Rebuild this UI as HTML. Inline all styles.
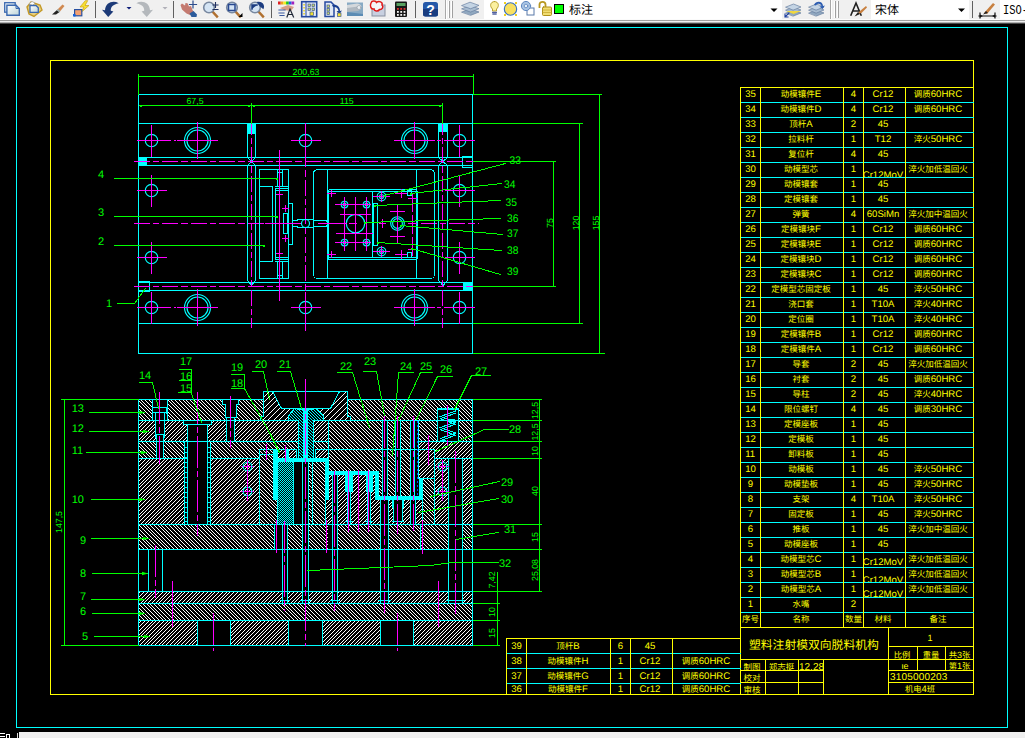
<!DOCTYPE html>
<html><head><meta charset="utf-8"><title>CAD</title>
<style>html,body{margin:0;padding:0;background:#000;overflow:hidden}svg{display:block}text{white-space:pre}.t{font-family:"Liberation Sans","Noto Sans CJK SC",sans-serif;text-rendering:geometricPrecision}</style>
</head><body>
<svg width="1025" height="738" viewBox="0 0 1025 738" shape-rendering="crispEdges" stroke-linecap="square" font-family="'Liberation Sans', sans-serif">
<defs>
<pattern id="hb" width="15" height="15" patternUnits="userSpaceOnUse"><rect x="0" y="0" width="1" height="1" fill="#ffffff"/><rect x="4" y="0" width="1" height="1" fill="#ffffff"/><rect x="8" y="0" width="1" height="1" fill="#ffffff"/><rect x="11" y="0" width="1" height="1" fill="#ffffff"/><rect x="1" y="1" width="1" height="1" fill="#ffffff"/><rect x="5" y="1" width="1" height="1" fill="#ffffff"/><rect x="9" y="1" width="1" height="1" fill="#ffffff"/><rect x="12" y="1" width="1" height="1" fill="#ffffff"/><rect x="2" y="2" width="1" height="1" fill="#ffffff"/><rect x="6" y="2" width="1" height="1" fill="#ffffff"/><rect x="10" y="2" width="1" height="1" fill="#ffffff"/><rect x="13" y="2" width="1" height="1" fill="#ffffff"/><rect x="3" y="3" width="1" height="1" fill="#ffffff"/><rect x="7" y="3" width="1" height="1" fill="#ffffff"/><rect x="11" y="3" width="1" height="1" fill="#ffffff"/><rect x="14" y="3" width="1" height="1" fill="#ffffff"/><rect x="0" y="4" width="1" height="1" fill="#ffffff"/><rect x="4" y="4" width="1" height="1" fill="#ffffff"/><rect x="8" y="4" width="1" height="1" fill="#ffffff"/><rect x="12" y="4" width="1" height="1" fill="#ffffff"/><rect x="1" y="5" width="1" height="1" fill="#ffffff"/><rect x="5" y="5" width="1" height="1" fill="#ffffff"/><rect x="9" y="5" width="1" height="1" fill="#ffffff"/><rect x="13" y="5" width="1" height="1" fill="#ffffff"/><rect x="2" y="6" width="1" height="1" fill="#ffffff"/><rect x="6" y="6" width="1" height="1" fill="#ffffff"/><rect x="10" y="6" width="1" height="1" fill="#ffffff"/><rect x="14" y="6" width="1" height="1" fill="#ffffff"/><rect x="0" y="7" width="1" height="1" fill="#ffffff"/><rect x="3" y="7" width="1" height="1" fill="#ffffff"/><rect x="7" y="7" width="1" height="1" fill="#ffffff"/><rect x="11" y="7" width="1" height="1" fill="#ffffff"/><rect x="1" y="8" width="1" height="1" fill="#ffffff"/><rect x="4" y="8" width="1" height="1" fill="#ffffff"/><rect x="8" y="8" width="1" height="1" fill="#ffffff"/><rect x="12" y="8" width="1" height="1" fill="#ffffff"/><rect x="2" y="9" width="1" height="1" fill="#ffffff"/><rect x="5" y="9" width="1" height="1" fill="#ffffff"/><rect x="9" y="9" width="1" height="1" fill="#ffffff"/><rect x="13" y="9" width="1" height="1" fill="#ffffff"/><rect x="3" y="10" width="1" height="1" fill="#ffffff"/><rect x="6" y="10" width="1" height="1" fill="#ffffff"/><rect x="10" y="10" width="1" height="1" fill="#ffffff"/><rect x="14" y="10" width="1" height="1" fill="#ffffff"/><rect x="0" y="11" width="1" height="1" fill="#ffffff"/><rect x="4" y="11" width="1" height="1" fill="#ffffff"/><rect x="7" y="11" width="1" height="1" fill="#ffffff"/><rect x="11" y="11" width="1" height="1" fill="#ffffff"/><rect x="1" y="12" width="1" height="1" fill="#ffffff"/><rect x="5" y="12" width="1" height="1" fill="#ffffff"/><rect x="8" y="12" width="1" height="1" fill="#ffffff"/><rect x="12" y="12" width="1" height="1" fill="#ffffff"/><rect x="2" y="13" width="1" height="1" fill="#ffffff"/><rect x="6" y="13" width="1" height="1" fill="#ffffff"/><rect x="9" y="13" width="1" height="1" fill="#ffffff"/><rect x="13" y="13" width="1" height="1" fill="#ffffff"/><rect x="3" y="14" width="1" height="1" fill="#ffffff"/><rect x="7" y="14" width="1" height="1" fill="#ffffff"/><rect x="10" y="14" width="1" height="1" fill="#ffffff"/><rect x="14" y="14" width="1" height="1" fill="#ffffff"/></pattern>
<pattern id="hf" width="15" height="15" patternUnits="userSpaceOnUse"><rect x="0" y="0" width="1" height="1" fill="#ffffff"/><rect x="4" y="0" width="1" height="1" fill="#ffffff"/><rect x="8" y="0" width="1" height="1" fill="#ffffff"/><rect x="11" y="0" width="1" height="1" fill="#ffffff"/><rect x="3" y="1" width="1" height="1" fill="#ffffff"/><rect x="7" y="1" width="1" height="1" fill="#ffffff"/><rect x="10" y="1" width="1" height="1" fill="#ffffff"/><rect x="14" y="1" width="1" height="1" fill="#ffffff"/><rect x="2" y="2" width="1" height="1" fill="#ffffff"/><rect x="6" y="2" width="1" height="1" fill="#ffffff"/><rect x="9" y="2" width="1" height="1" fill="#ffffff"/><rect x="13" y="2" width="1" height="1" fill="#ffffff"/><rect x="1" y="3" width="1" height="1" fill="#ffffff"/><rect x="5" y="3" width="1" height="1" fill="#ffffff"/><rect x="8" y="3" width="1" height="1" fill="#ffffff"/><rect x="12" y="3" width="1" height="1" fill="#ffffff"/><rect x="0" y="4" width="1" height="1" fill="#ffffff"/><rect x="4" y="4" width="1" height="1" fill="#ffffff"/><rect x="7" y="4" width="1" height="1" fill="#ffffff"/><rect x="11" y="4" width="1" height="1" fill="#ffffff"/><rect x="3" y="5" width="1" height="1" fill="#ffffff"/><rect x="6" y="5" width="1" height="1" fill="#ffffff"/><rect x="10" y="5" width="1" height="1" fill="#ffffff"/><rect x="14" y="5" width="1" height="1" fill="#ffffff"/><rect x="2" y="6" width="1" height="1" fill="#ffffff"/><rect x="5" y="6" width="1" height="1" fill="#ffffff"/><rect x="9" y="6" width="1" height="1" fill="#ffffff"/><rect x="13" y="6" width="1" height="1" fill="#ffffff"/><rect x="1" y="7" width="1" height="1" fill="#ffffff"/><rect x="4" y="7" width="1" height="1" fill="#ffffff"/><rect x="8" y="7" width="1" height="1" fill="#ffffff"/><rect x="12" y="7" width="1" height="1" fill="#ffffff"/><rect x="0" y="8" width="1" height="1" fill="#ffffff"/><rect x="3" y="8" width="1" height="1" fill="#ffffff"/><rect x="7" y="8" width="1" height="1" fill="#ffffff"/><rect x="11" y="8" width="1" height="1" fill="#ffffff"/><rect x="2" y="9" width="1" height="1" fill="#ffffff"/><rect x="6" y="9" width="1" height="1" fill="#ffffff"/><rect x="10" y="9" width="1" height="1" fill="#ffffff"/><rect x="14" y="9" width="1" height="1" fill="#ffffff"/><rect x="1" y="10" width="1" height="1" fill="#ffffff"/><rect x="5" y="10" width="1" height="1" fill="#ffffff"/><rect x="9" y="10" width="1" height="1" fill="#ffffff"/><rect x="13" y="10" width="1" height="1" fill="#ffffff"/><rect x="0" y="11" width="1" height="1" fill="#ffffff"/><rect x="4" y="11" width="1" height="1" fill="#ffffff"/><rect x="8" y="11" width="1" height="1" fill="#ffffff"/><rect x="12" y="11" width="1" height="1" fill="#ffffff"/><rect x="3" y="12" width="1" height="1" fill="#ffffff"/><rect x="7" y="12" width="1" height="1" fill="#ffffff"/><rect x="11" y="12" width="1" height="1" fill="#ffffff"/><rect x="14" y="12" width="1" height="1" fill="#ffffff"/><rect x="2" y="13" width="1" height="1" fill="#ffffff"/><rect x="6" y="13" width="1" height="1" fill="#ffffff"/><rect x="10" y="13" width="1" height="1" fill="#ffffff"/><rect x="13" y="13" width="1" height="1" fill="#ffffff"/><rect x="1" y="14" width="1" height="1" fill="#ffffff"/><rect x="5" y="14" width="1" height="1" fill="#ffffff"/><rect x="9" y="14" width="1" height="1" fill="#ffffff"/><rect x="12" y="14" width="1" height="1" fill="#ffffff"/></pattern>
<pattern id="hfw" width="11" height="11" patternUnits="userSpaceOnUse"><rect x="0" y="0" width="1" height="1" fill="#ffffff"/><rect x="5" y="0" width="1" height="1" fill="#ffffff"/><rect x="4" y="1" width="1" height="1" fill="#ffffff"/><rect x="10" y="1" width="1" height="1" fill="#ffffff"/><rect x="3" y="2" width="1" height="1" fill="#ffffff"/><rect x="9" y="2" width="1" height="1" fill="#ffffff"/><rect x="2" y="3" width="1" height="1" fill="#ffffff"/><rect x="8" y="3" width="1" height="1" fill="#ffffff"/><rect x="1" y="4" width="1" height="1" fill="#ffffff"/><rect x="7" y="4" width="1" height="1" fill="#ffffff"/><rect x="0" y="5" width="1" height="1" fill="#ffffff"/><rect x="6" y="5" width="1" height="1" fill="#ffffff"/><rect x="5" y="6" width="1" height="1" fill="#ffffff"/><rect x="10" y="6" width="1" height="1" fill="#ffffff"/><rect x="4" y="7" width="1" height="1" fill="#ffffff"/><rect x="9" y="7" width="1" height="1" fill="#ffffff"/><rect x="3" y="8" width="1" height="1" fill="#ffffff"/><rect x="8" y="8" width="1" height="1" fill="#ffffff"/><rect x="2" y="9" width="1" height="1" fill="#ffffff"/><rect x="7" y="9" width="1" height="1" fill="#ffffff"/><rect x="1" y="10" width="1" height="1" fill="#ffffff"/><rect x="6" y="10" width="1" height="1" fill="#ffffff"/></pattern>
<pattern id="hb2" width="3" height="3" patternUnits="userSpaceOnUse"><rect x="0" y="0" width="1" height="1" fill="#00ffff"/><rect x="1" y="1" width="1" height="1" fill="#00ffff"/><rect x="2" y="2" width="1" height="1" fill="#00ffff"/></pattern>
<pattern id="hx" width="2" height="2" patternUnits="userSpaceOnUse"><rect x="0" y="0" width="1" height="1" fill="#00ffff"/><rect x="1" y="1" width="1" height="1" fill="#00ffff"/></pattern>
</defs>
<rect x="0" y="0" width="1025" height="738" fill="#000"/>
<rect x="0" y="0" width="1025" height="19" fill="#f0f0f0"/>
<rect x="0" y="19" width="1025" height="1" fill="#fbfbfb"/>
<rect x="0" y="20" width="1025" height="1" fill="#a0a0a0"/>
<rect x="0" y="21" width="1025" height="1" fill="#f0f0f0"/>
<rect x="0" y="22" width="1025" height="1" fill="#b0b0b0"/>
<rect x="0" y="23" width="1025" height="1" fill="#484848"/>
<g shape-rendering="geometricPrecision">
<defs><linearGradient id="pg" x1="0" y1="0" x2="1" y2="1"><stop offset="0" stop-color="#ffffff"/><stop offset="1" stop-color="#bcd4d8"/></linearGradient></defs>
<rect x="4.7" y="2.7" width="10.5" height="9.5" fill="url(#pg)" stroke="#3a68b0" stroke-width="1.3"/>
<path d="M6.9 5.2 H16 L19.3 8.5 V15.3 H6.9 Z" fill="url(#pg)" stroke="#3a68b0" stroke-width="1.4"/><path d="M16 5.2 V8.5 H19.3" fill="none" stroke="#3a68b0" stroke-width="1"/>
<path d="M31 2 L40 5 L42 10 L34 16.5 L29 14 L27 7 Z" fill="#e6cf80" stroke="#c49a28" stroke-width="1.4"/>
<path d="M29 4 L32 1.5 L35 3 L33 5Z" fill="#fff" stroke="#999" stroke-width=".6"/>
<path d="M30 5.5 H36 L38.3 7.8 V12.3 H30 Z" fill="url(#pg)" stroke="#3a68b0" stroke-width="1.3"/>
<path d="M52 14.5 L57 10 L59.5 12 L56 14.5 Z" fill="#222"/><path d="M57 10 L62.5 4.5 L64.5 6 L59.5 12Z" fill="#d08850"/><path d="M56.5 10.3 L58 9 L60.3 11 L59.3 12.2Z" fill="#9aa"/>
<path d="M85 1 L80 7 H84 L81 12.5 L89 5.5 H85 L87.5 1Z" fill="#f8e030" stroke="#c8a018" stroke-width=".7"/>
<rect x="74.6" y="9.6" width="7.2" height="6.2" fill="#f4a070" stroke="#2850a0" stroke-width="1.2"/><rect x="73" y="14" width="2.5" height="2.5" fill="#1060e0"/>
<rect x="95" y="1" width="1" height="17" fill="#606060"/>
<path d="M102 9.7 L108.2 16.9 L113.4 11.4 L110.8 10.8 C110.5 7 113 4.5 118.7 3.2 C113 0 105.5 2.5 105 10.2 Z" fill="#1c3a78"/>
<path d="M126.5 7 H131.5 L129 9.6Z" fill="#10207a"/>
<path d="M153 9.7 L146.8 16.9 L141.6 11.4 L144.2 10.8 C144.5 7 142 4.5 136.3 3.2 C142 0 149.5 2.5 150 10.2 Z" fill="#b4b8bc"/>
<path d="M162.5 7 H167.5 L165 9.6Z" fill="#b0b0b8"/>
<rect x="173" y="1" width="1" height="17" fill="#606060"/>
<path d="M180.5 5 L182 3.5 L185 5.5 L185.5 3 L187.5 3.2 L189 6.5 L191 6 L192.5 10 L193.5 11.5 L190 15 L186.5 13.5 L182 9.5Z" fill="#c47a70"/><path d="M189.5 13.5 L193.5 11 L197 14.5 L196.5 17 H191.5Z" fill="#2c5c9c"/>
<path d="M193 1 V8 M189.5 4.5 H196.5" stroke="#2c4c8c" stroke-width="1.2" fill="none"/>
<path d="M212 11 L217 16.5" stroke="#b07030" stroke-width="2.4"/>
<circle cx="209" cy="7.5" r="5.3" fill="#d4e4f4" stroke="#7888a0" stroke-width="1.6"/>
<path d="M215.5 2.5 V7.5 M213 5 H218 M213 9.5 H218" stroke="#203060" stroke-width="1.1"/>
<path d="M235 11 L240 16.5" stroke="#b07030" stroke-width="2.4"/>
<circle cx="232" cy="7.5" r="5.3" fill="#d4e4f4" stroke="#7888a0" stroke-width="1.6"/>
<rect x="228.5" y="4.5" width="6.5" height="6" fill="none" stroke="#284890" stroke-width="1.5"/><path d="M242.5 13 V17 H238.5Z" fill="#000"/>
<path d="M258 11 L263 16.5" stroke="#b07030" stroke-width="2.4"/>
<circle cx="255" cy="7.5" r="5.3" fill="#d4e4f4" stroke="#7888a0" stroke-width="1.6"/>
<path d="M252 9 V5 H257 M258 2.5 C262 2 264 5 263 8 L260.5 6Z" stroke="#1c3c80" stroke-width="1.5" fill="#1c3c80"/>
<rect x="271" y="1" width="1" height="17" fill="#606060"/>
<rect x="278" y="1.5" width="2.7" height="3" fill="#e02020"/>
<rect x="280.7" y="1.5" width="2.7" height="3" fill="#f0a020"/>
<rect x="283.4" y="1.5" width="2.7" height="3" fill="#f0f020"/>
<rect x="286.1" y="1.5" width="2.7" height="3" fill="#20c020"/>
<rect x="288.8" y="1.5" width="2.7" height="3" fill="#2060e0"/>
<rect x="291.5" y="1.5" width="2.7" height="3" fill="#a020c0"/>
<path d="M280 8 L288 5 L294 7 L291 11 L284 10Z" fill="#d8a088"/><path d="M279 10 H285 M279 13 H284 M280 15.5 H284" stroke="#3858a0" stroke-width="1.2"/><path d="M287 17 L290 9 L293.5 17 M288 14.5 H292.5" stroke="#202838" stroke-width="1.2" fill="none"/>
<rect x="301.7" y="1.7" width="15" height="15" fill="#e8eef8" stroke="#2448a0" stroke-width="1.6"/><path d="M306 2 V16" stroke="#2448a0" stroke-width="1"/>
<rect x="303.3" y="4" width="1.5" height="1.5" fill="#e8d020"/>
<rect x="303.3" y="7" width="1.5" height="1.5" fill="#e8d020"/>
<rect x="303.3" y="10" width="1.5" height="1.5" fill="#e8d020"/>
<rect x="303.3" y="13" width="1.5" height="1.5" fill="#e8d020"/>
<rect x="308" y="4" width="2.6" height="2.6" fill="#c8d870" stroke="#405890" stroke-width=".7"/>
<rect x="312" y="4" width="2.6" height="2.6" fill="#c8d870" stroke="#405890" stroke-width=".7"/>
<rect x="308" y="8" width="2.6" height="2.6" fill="#c8d870" stroke="#405890" stroke-width=".7"/>
<rect x="312" y="8" width="2.6" height="2.6" fill="#c8d870" stroke="#405890" stroke-width=".7"/>
<rect x="310" y="12" width="3.5" height="3.5" fill="#f0e030" stroke="#405890" stroke-width=".7"/>
<path d="M325 2 H331 L334 5 V16.5 H325Z" fill="#e0e8f4" stroke="#2448a0" stroke-width="1.5"/>
<rect x="327" y="5" width="2.6" height="2.6" fill="#c8d870" stroke="#405890" stroke-width=".7"/>
<rect x="327" y="8.5" width="2.6" height="2.6" fill="#c8d870" stroke="#405890" stroke-width=".7"/>
<rect x="327" y="12" width="2.6" height="2.6" fill="#c8d870" stroke="#405890" stroke-width=".7"/>
<path d="M332 5 C337 4 340 7 340 11 L342 10.5 L339.5 14 L336.5 11 L338.5 11 C338 8 336 6.5 333 7Z" fill="#1c4090"/><rect x="337.5" y="13" width="3.5" height="3.5" fill="#f0e030" stroke="#405890" stroke-width=".7"/>
<path d="M347 2.5 H363 V16 H347Z" fill="#88aac4"/><path d="M347 5 L357 3.5 C362 4 363 8 359 10 L347 10.5Z" fill="#d4d8dc"/><path d="M347 8 L358 6.5 C361 7 361 10 358 11 L347 12Z" fill="#b0b8c0"/><circle cx="359" cy="7.5" r="2" fill="#e8ecf0" stroke="#909aa4" stroke-width=".6"/><path d="M347 12 L363 14 V16 H347Z" fill="#5c8cb4"/>
<rect x="372" y="5" width="13" height="11" fill="#c8d0e0" stroke="#8890a0" stroke-width="1"/><path d="M371 3 C372 0 376 1 376.5 2.5 C379 0.5 383 2 382 5 C384 7 382 10 379.5 9.5 C378 12 374 11 374 9 C371 9.5 369.5 6 371 3Z" fill="#f4f4f8" stroke="#e01818" stroke-width="1.5"/>
<rect x="395" y="1.5" width="12" height="15.5" rx="1" fill="#181818"/><rect x="396.5" y="3" width="9" height="3" fill="#58a060"/>
<rect x="397" y="8" width="1.8" height="1.8" fill="#e03030"/>
<rect x="400.3" y="8" width="1.8" height="1.8" fill="#e03030"/>
<rect x="403.6" y="8" width="1.8" height="1.8" fill="#e03030"/>
<rect x="397" y="11" width="1.8" height="1.8" fill="#f4f4f4"/>
<rect x="400.3" y="11" width="1.8" height="1.8" fill="#f4f4f4"/>
<rect x="403.6" y="11" width="1.8" height="1.8" fill="#f4f4f4"/>
<rect x="397" y="14" width="1.8" height="1.8" fill="#f4f4f4"/>
<rect x="400.3" y="14" width="1.8" height="1.8" fill="#f4f4f4"/>
<rect x="403.6" y="14" width="1.8" height="1.8" fill="#f4f4f4"/>
<rect x="415" y="1" width="1" height="17" fill="#606060"/>
<rect x="423" y="2" width="15" height="14.5" rx="2.5" fill="#2458a8"/><path d="M423 9 H438 V14 Q438 16.5 435.5 16.5 H425.5 Q423 16.5 423 14Z" fill="#183c80"/>
<text x="430.5" y="14.6" font-size="14" font-weight="bold" fill="#fff" text-anchor="middle" font-family="'Liberation Sans', sans-serif">?</text>
<rect x="445" y="0" width="1" height="19" fill="#a8a8a8"/>
<rect x="446" y="0" width="1" height="19" fill="#fff"/>
<rect x="448" y="1" width="1" height="17" fill="#fff"/>
<rect x="449" y="1" width="1" height="17" fill="#a0a0a0"/>
<rect x="451" y="1" width="1" height="17" fill="#fff"/>
<rect x="452" y="1" width="1" height="17" fill="#a0a0a0"/>
<path d="M462 12.0 L470 8.8 L479 12.0 L471 15.2 Z" fill="#90a8c0" stroke="#6880a0" stroke-width=".7"/>
<path d="M462 8.7 L470 5.499999999999999 L479 8.7 L471 11.899999999999999 Z" fill="#a8bcd0" stroke="#6880a0" stroke-width=".7"/>
<path d="M462 5.4 L470 2.2 L479 5.4 L471 8.600000000000001 Z" fill="#c4d4e4" stroke="#6880a0" stroke-width=".7"/>
<rect x="484" y="0" width="298" height="19" fill="#ffffff"/>
<path d="M494.5 1.5 C490 1.5 489.5 6.5 492.5 9 V11 H496.5 V9 C499.5 6.5 499 1.5 494.5 1.5Z" fill="#fbf0a0" stroke="#b8a030" stroke-width="1"/><path d="M492.7 12.3 H496.3 M493 14 H496" stroke="#5060a0" stroke-width="1.3"/>
<circle cx="510.5" cy="9" r="6.2" fill="#f8e060" stroke="#3870c0" stroke-width="1.1"/>
<rect x="504" y="2" width="2" height="2" fill="#f0d020"/>
<rect x="515" y="2" width="2" height="2" fill="#f0d020"/>
<rect x="504" y="14" width="2" height="2" fill="#f0d020"/>
<rect x="515" y="14" width="2" height="2" fill="#f0d020"/>
<rect x="527" y="8" width="7" height="7" fill="#fff" stroke="#5878a8" stroke-width="1"/><circle cx="526" cy="6" r="4.6" fill="#a8c4e4" stroke="#6088c0" stroke-width="1"/><circle cx="526" cy="6" r="1.8" fill="#e8f0f8" stroke="#6088c0" stroke-width=".8"/>
<path d="M539.5 7 V4.5 C539.5 1 545.5 1 545.5 4.5 V6" fill="none" stroke="#b89820" stroke-width="1.8"/><rect x="542.5" y="7" width="9" height="8.5" rx="1" fill="#f0dc70" stroke="#b09018" stroke-width="1"/><path d="M543 10 H551 M543 12.5 H551" stroke="#c8a830" stroke-width=".8"/>
<rect x="554.5" y="4.5" width="9" height="9" fill="#00ff00" stroke="#000" stroke-width="1"/>
<text class="t" x="569" y="14" font-size="12" fill="#000">标注</text>
<path d="M770.5 8.5 H777.5 L774 12Z" fill="#000"/>
<path d="M786 13 L793.5 10 L801 13 L793.5 16 Z" fill="#90a8c0" stroke="#6880a0" stroke-width=".7"/>
<path d="M786 10 L793.5 7 L801 10 L793.5 13 Z" fill="#a8bcd0" stroke="#6880a0" stroke-width=".7"/>
<path d="M786 7 L793.5 4 L801 7 L793.5 10 Z" fill="#c4d4e4" stroke="#6880a0" stroke-width=".7"/>
<path d="M809 13 L816.5 10 L824 13 L816.5 16 Z" fill="#90a8c0" stroke="#6880a0" stroke-width=".7"/>
<path d="M809 10 L816.5 7 L824 10 L816.5 13 Z" fill="#a8bcd0" stroke="#6880a0" stroke-width=".7"/>
<path d="M809 7 L816.5 4 L824 7 L816.5 10 Z" fill="#c4d4e4" stroke="#6880a0" stroke-width=".7"/>
<path d="M786 11 L801 11 L793.5 14 Z" fill="#f0d840"/><path d="M785 17 L789 13 M785 17 V14 M785 17 H788" stroke="#2040a0" stroke-width="1.1" fill="none"/>
<path d="M814 5 C816 0 823 1 823 6 L825 5.5 L822.5 9 L819.5 6.5 L821.5 6.3 C821 3 817 3 816 5.5Z" fill="#2c5cb0"/>
<rect x="830" y="0" width="1" height="19" fill="#a8a8a8"/>
<rect x="831" y="0" width="1" height="19" fill="#fff"/>
<rect x="834" y="1" width="1" height="17" fill="#fff"/>
<rect x="835" y="1" width="1" height="17" fill="#a0a0a0"/>
<rect x="837" y="1" width="1" height="17" fill="#fff"/>
<rect x="838" y="1" width="1" height="17" fill="#a0a0a0"/>
<path d="M851 15 L856 3 L861 15 M853 11 H859" stroke="#202020" stroke-width="1.6" fill="none"/><path d="M855 16 L860 11 L866 6 L867 7.5 L862 12.5Z" fill="#c88040"/><path d="M854.5 16.5 L858 12 L860 14Z" fill="#202020"/>
<rect x="871" y="0" width="98" height="19" fill="#ffffff"/>
<text class="t" x="875" y="14" font-size="12" fill="#000">宋体</text>
<path d="M958 8.5 H965 L961.5 12Z" fill="#000"/>
<rect x="972" y="1" width="1" height="17" fill="#606060"/>
<path d="M979 16 H996 M980 13 V18 M995 13 V18" stroke="#101010" stroke-width="1.2" fill="none"/><path d="M983 16 L980 14.5 V17.5Z M992 16 L995 14.5 V17.5Z" fill="#101010"/><path d="M984 13 L993 3 L995 4.5 L987 14Z" fill="#c88040"/><path d="M983 14.5 L986 11 L988 13Z" fill="#202020"/>
<rect x="1000" y="0" width="25" height="19" fill="#ffffff"/>
<text x="1003" y="14" font-size="12" fill="#000" font-family="'Liberation Mono', monospace" textLength="25" lengthAdjust="spacingAndGlyphs">ISO-</text>
</g>
<rect x="19" y="732" width="1006" height="6" fill="#f0f0f0"/>
<rect x="0" y="733" width="5" height="1" fill="#fff"/>
<rect x="0" y="736" width="5" height="1" fill="#fff"/>
<rect x="6" y="734" width="4" height="1" fill="#fff"/>
<rect x="6" y="735" width="1" height="3" fill="#fff"/>
<rect x="9" y="735" width="1" height="3" fill="#fff"/>
<rect x="17" y="733" width="1" height="5" fill="#ddd"/>
<rect x="16.5" y="27.5" width="991" height="700" stroke="#00ffff" stroke-width="1" fill="none"/>
<rect x="50.5" y="60.5" width="923" height="634" stroke="#ffff00" stroke-width="1" fill="none"/>
<rect x="138.5" y="94.5" width="334" height="259" stroke="#00ffff" stroke-width="1" fill="none"/>
<line x1="138.5" y1="123.5" x2="472.5" y2="123.5" stroke="#00ffff" stroke-width="1"/>
<line x1="138.5" y1="323.5" x2="472.5" y2="323.5" stroke="#00ffff" stroke-width="1"/>
<line x1="138.5" y1="157.5" x2="472.5" y2="157.5" stroke="#00ffff" stroke-width="1"/>
<line x1="138.5" y1="165.5" x2="472.5" y2="165.5" stroke="#00ffff" stroke-width="1"/>
<line x1="138.5" y1="282.5" x2="472.5" y2="282.5" stroke="#00ffff" stroke-width="1"/>
<line x1="138.5" y1="290.5" x2="472.5" y2="290.5" stroke="#00ffff" stroke-width="1"/>
<line x1="247.5" y1="123.5" x2="247.5" y2="157.5" stroke="#00ffff" stroke-width="1"/>
<line x1="255.5" y1="123.5" x2="255.5" y2="157.5" stroke="#00ffff" stroke-width="1"/>
<line x1="247.5" y1="165.5" x2="247.5" y2="280.5" stroke="#00ffff" stroke-width="1"/>
<line x1="255.5" y1="165.5" x2="255.5" y2="280.5" stroke="#00ffff" stroke-width="1"/>
<line x1="247.5" y1="157.5" x2="255.5" y2="165.5" stroke="#00ffff" stroke-width="1"/>
<line x1="255.5" y1="157.5" x2="247.5" y2="165.5" stroke="#00ffff" stroke-width="1"/>
<line x1="247.5" y1="280.5" x2="251.5" y2="285.5" stroke="#00ffff" stroke-width="1"/>
<line x1="255.5" y1="280.5" x2="251.5" y2="285.5" stroke="#00ffff" stroke-width="1"/>
<line x1="438.5" y1="123.5" x2="438.5" y2="157.5" stroke="#00ffff" stroke-width="1"/>
<line x1="447.5" y1="123.5" x2="447.5" y2="157.5" stroke="#00ffff" stroke-width="1"/>
<line x1="438.5" y1="165.5" x2="438.5" y2="280.5" stroke="#00ffff" stroke-width="1"/>
<line x1="447.5" y1="165.5" x2="447.5" y2="280.5" stroke="#00ffff" stroke-width="1"/>
<line x1="438.5" y1="157.5" x2="447.5" y2="165.5" stroke="#00ffff" stroke-width="1"/>
<line x1="447.5" y1="157.5" x2="438.5" y2="165.5" stroke="#00ffff" stroke-width="1"/>
<line x1="438.5" y1="280.5" x2="443" y2="285.5" stroke="#00ffff" stroke-width="1"/>
<line x1="447.5" y1="280.5" x2="443" y2="285.5" stroke="#00ffff" stroke-width="1"/>
<rect x="139" y="158" width="8" height="7" fill="#00ffff"/>
<rect x="248" y="124" width="7" height="10" fill="#00ffff"/>
<rect x="439" y="124" width="8" height="8" fill="#00ffff"/>
<rect x="463" y="283" width="9" height="7" fill="#00ffff"/>
<rect x="462.5" y="156.5" width="10" height="11" stroke="#00ffff" stroke-width="1" fill="none"/>
<rect x="138.5" y="281.5" width="11" height="10" stroke="#00ffff" stroke-width="1" fill="none"/>
<circle cx="151.5" cy="140.5" r="6.2" stroke="#00ffff" stroke-width="1.15" fill="none" shape-rendering="geometricPrecision"/>
<line x1="137.5" y1="140.5" x2="166.5" y2="140.5" stroke="#ff00ff" stroke-width="1"/>
<line x1="151.5" y1="125.5" x2="151.5" y2="156.5" stroke="#ff00ff" stroke-width="1"/>
<circle cx="305.5" cy="140.5" r="6.2" stroke="#00ffff" stroke-width="1.15" fill="none" shape-rendering="geometricPrecision"/>
<line x1="291.5" y1="140.5" x2="320.5" y2="140.5" stroke="#ff00ff" stroke-width="1"/>
<line x1="305.5" y1="125.5" x2="305.5" y2="156.5" stroke="#ff00ff" stroke-width="1"/>
<circle cx="459.5" cy="140.5" r="6.2" stroke="#00ffff" stroke-width="1.15" fill="none" shape-rendering="geometricPrecision"/>
<line x1="445.5" y1="140.5" x2="474.5" y2="140.5" stroke="#ff00ff" stroke-width="1"/>
<line x1="459.5" y1="125.5" x2="459.5" y2="156.5" stroke="#ff00ff" stroke-width="1"/>
<circle cx="151.5" cy="190.5" r="6.2" stroke="#00ffff" stroke-width="1.15" fill="none" shape-rendering="geometricPrecision"/>
<line x1="137.5" y1="190.5" x2="166.5" y2="190.5" stroke="#ff00ff" stroke-width="1"/>
<line x1="151.5" y1="175.5" x2="151.5" y2="206.5" stroke="#ff00ff" stroke-width="1"/>
<circle cx="151.5" cy="257.5" r="6.2" stroke="#00ffff" stroke-width="1.15" fill="none" shape-rendering="geometricPrecision"/>
<line x1="137.5" y1="257.5" x2="166.5" y2="257.5" stroke="#ff00ff" stroke-width="1"/>
<line x1="151.5" y1="242.5" x2="151.5" y2="273.5" stroke="#ff00ff" stroke-width="1"/>
<circle cx="459.5" cy="190.5" r="6.2" stroke="#00ffff" stroke-width="1.15" fill="none" shape-rendering="geometricPrecision"/>
<line x1="445.5" y1="190.5" x2="474.5" y2="190.5" stroke="#ff00ff" stroke-width="1"/>
<line x1="459.5" y1="175.5" x2="459.5" y2="206.5" stroke="#ff00ff" stroke-width="1"/>
<circle cx="459.5" cy="257.5" r="6.2" stroke="#00ffff" stroke-width="1.15" fill="none" shape-rendering="geometricPrecision"/>
<line x1="445.5" y1="257.5" x2="474.5" y2="257.5" stroke="#ff00ff" stroke-width="1"/>
<line x1="459.5" y1="242.5" x2="459.5" y2="273.5" stroke="#ff00ff" stroke-width="1"/>
<circle cx="151.5" cy="307.5" r="6.2" stroke="#00ffff" stroke-width="1.15" fill="none" shape-rendering="geometricPrecision"/>
<line x1="137.5" y1="307.5" x2="166.5" y2="307.5" stroke="#ff00ff" stroke-width="1"/>
<line x1="151.5" y1="292.5" x2="151.5" y2="323.5" stroke="#ff00ff" stroke-width="1"/>
<circle cx="305.5" cy="307.5" r="6.2" stroke="#00ffff" stroke-width="1.15" fill="none" shape-rendering="geometricPrecision"/>
<line x1="291.5" y1="307.5" x2="320.5" y2="307.5" stroke="#ff00ff" stroke-width="1"/>
<line x1="305.5" y1="292.5" x2="305.5" y2="323.5" stroke="#ff00ff" stroke-width="1"/>
<circle cx="459.5" cy="307.5" r="6.2" stroke="#00ffff" stroke-width="1.15" fill="none" shape-rendering="geometricPrecision"/>
<line x1="445.5" y1="307.5" x2="474.5" y2="307.5" stroke="#ff00ff" stroke-width="1"/>
<line x1="459.5" y1="292.5" x2="459.5" y2="323.5" stroke="#ff00ff" stroke-width="1"/>
<circle cx="197.5" cy="140.5" r="13" stroke="#00ffff" stroke-width="1.15" fill="none" shape-rendering="geometricPrecision"/>
<circle cx="197.5" cy="140.5" r="10.5" stroke="#00ffff" stroke-width="1.15" fill="none" shape-rendering="geometricPrecision"/>
<line x1="177.5" y1="140.5" x2="217.5" y2="140.5" stroke="#ff00ff" stroke-width="1"/>
<line x1="197.5" y1="122.5" x2="197.5" y2="158.5" stroke="#ff00ff" stroke-width="1"/>
<circle cx="414.5" cy="140.5" r="13" stroke="#00ffff" stroke-width="1.15" fill="none" shape-rendering="geometricPrecision"/>
<circle cx="414.5" cy="140.5" r="10.5" stroke="#00ffff" stroke-width="1.15" fill="none" shape-rendering="geometricPrecision"/>
<line x1="394.5" y1="140.5" x2="434.5" y2="140.5" stroke="#ff00ff" stroke-width="1"/>
<line x1="414.5" y1="122.5" x2="414.5" y2="158.5" stroke="#ff00ff" stroke-width="1"/>
<circle cx="197.5" cy="307.5" r="13" stroke="#00ffff" stroke-width="1.15" fill="none" shape-rendering="geometricPrecision"/>
<circle cx="197.5" cy="307.5" r="10.5" stroke="#00ffff" stroke-width="1.15" fill="none" shape-rendering="geometricPrecision"/>
<line x1="177.5" y1="307.5" x2="217.5" y2="307.5" stroke="#ff00ff" stroke-width="1"/>
<line x1="197.5" y1="289.5" x2="197.5" y2="325.5" stroke="#ff00ff" stroke-width="1"/>
<circle cx="414.5" cy="307.5" r="13" stroke="#00ffff" stroke-width="1.15" fill="none" shape-rendering="geometricPrecision"/>
<circle cx="414.5" cy="307.5" r="10.5" stroke="#00ffff" stroke-width="1.15" fill="none" shape-rendering="geometricPrecision"/>
<line x1="394.5" y1="307.5" x2="434.5" y2="307.5" stroke="#ff00ff" stroke-width="1"/>
<line x1="414.5" y1="289.5" x2="414.5" y2="325.5" stroke="#ff00ff" stroke-width="1"/>
<line x1="166.5" y1="140.5" x2="175.5" y2="140.5" stroke="#ff00ff" stroke-width="1" stroke-dasharray="4 3" stroke-linecap="butt"/>
<line x1="436.5" y1="140.5" x2="445.5" y2="140.5" stroke="#ff00ff" stroke-width="1" stroke-dasharray="4 3" stroke-linecap="butt"/>
<line x1="166.5" y1="307.5" x2="175.5" y2="307.5" stroke="#ff00ff" stroke-width="1" stroke-dasharray="4 3" stroke-linecap="butt"/>
<line x1="436.5" y1="307.5" x2="445.5" y2="307.5" stroke="#ff00ff" stroke-width="1" stroke-dasharray="4 3" stroke-linecap="butt"/>
<line x1="133.5" y1="161.5" x2="478.5" y2="161.5" stroke="#ff00ff" stroke-width="1" stroke-dasharray="16 3 6.5 3" stroke-linecap="butt"/>
<line x1="133.5" y1="286.5" x2="478.5" y2="286.5" stroke="#ff00ff" stroke-width="1" stroke-dasharray="16 3 6.5 3" stroke-linecap="butt"/>
<line x1="133.5" y1="223.5" x2="300.5" y2="223.5" stroke="#ff00ff" stroke-width="1" stroke-dasharray="16 3 6.5 3" stroke-linecap="butt"/>
<line x1="420.5" y1="223.5" x2="478.5" y2="223.5" stroke="#ff00ff" stroke-width="1" stroke-dasharray="16 3 6.5 3" stroke-linecap="butt"/>
<line x1="251.5" y1="118.5" x2="251.5" y2="327.5" stroke="#ff00ff" stroke-width="1" stroke-dasharray="16 3 6.5 3" stroke-linecap="butt"/>
<line x1="442.5" y1="118.5" x2="442.5" y2="327.5" stroke="#ff00ff" stroke-width="1" stroke-dasharray="16 3 6.5 3" stroke-linecap="butt"/>
<line x1="305.5" y1="122.5" x2="305.5" y2="330.5" stroke="#ff00ff" stroke-width="1" stroke-dasharray="16 3 6.5 3" stroke-linecap="butt"/>
<rect x="259.5" y="169.5" width="29" height="109" stroke="#00ffff" stroke-width="1" fill="none"/>
<line x1="259.5" y1="186.5" x2="272.5" y2="186.5" stroke="#00ffff" stroke-width="1"/>
<line x1="259.5" y1="261.5" x2="272.5" y2="261.5" stroke="#00ffff" stroke-width="1"/>
<line x1="272.5" y1="186.5" x2="272.5" y2="261.5" stroke="#00ffff" stroke-width="1"/>
<line x1="275.5" y1="188.5" x2="275.5" y2="259.5" stroke="#00ffff" stroke-width="1"/>
<line x1="275.5" y1="186.5" x2="288.5" y2="186.5" stroke="#00ffff" stroke-width="1"/>
<line x1="275.5" y1="188.5" x2="288.5" y2="188.5" stroke="#00ffff" stroke-width="1"/>
<line x1="275.5" y1="190.5" x2="288.5" y2="190.5" stroke="#00ffff" stroke-width="1"/>
<line x1="275.5" y1="257.5" x2="288.5" y2="257.5" stroke="#00ffff" stroke-width="1"/>
<line x1="275.5" y1="259.5" x2="288.5" y2="259.5" stroke="#00ffff" stroke-width="1"/>
<line x1="275.5" y1="261.5" x2="288.5" y2="261.5" stroke="#00ffff" stroke-width="1"/>
<rect x="277.5" y="169.5" width="5" height="17" stroke="#00ffff" stroke-width="1" fill="none"/>
<line x1="277.5" y1="172.5" x2="282.5" y2="172.5" stroke="#00ffff" stroke-width="1"/>
<rect x="277.5" y="261.5" width="5" height="17" stroke="#00ffff" stroke-width="1" fill="none"/>
<line x1="277.5" y1="275.5" x2="282.5" y2="275.5" stroke="#00ffff" stroke-width="1"/>
<path d="M288.5 203.5 L292.5 203.5 L292.5 244.5 L288.5 244.5" stroke="#00ffff" stroke-width="1" fill="none"/>
<rect x="283.5" y="213.5" width="4" height="20" stroke="#00ffff" stroke-width="1" fill="none"/>
<path d="M292.5 220.5 L296.5 220.5 L298.5 219.5 L312.5 219.5 L314.5 220.5 L325.5 220.5 L327.5 221.5" stroke="#00ffff" stroke-width="1" fill="none"/>
<path d="M292.5 226.5 L296.5 226.5 L298.5 227.5 L312.5 227.5 L314.5 226.5 L325.5 226.5 L327.5 225.5" stroke="#00ffff" stroke-width="1" fill="none"/>
<circle cx="305.5" cy="223.5" r="4" stroke="#00ffff" stroke-width="1.15" fill="none" shape-rendering="geometricPrecision"/>
<line x1="279.5" y1="150.5" x2="279.5" y2="300.5" stroke="#ff00ff" stroke-width="1"/>
<line x1="276.5" y1="194.5" x2="282.5" y2="194.5" stroke="#ff00ff" stroke-width="1"/>
<line x1="279.5" y1="191.5" x2="279.5" y2="197.5" stroke="#ff00ff" stroke-width="1"/>
<line x1="282.5" y1="208.5" x2="288.5" y2="208.5" stroke="#ff00ff" stroke-width="1"/>
<line x1="285.5" y1="205.5" x2="285.5" y2="211.5" stroke="#ff00ff" stroke-width="1"/>
<line x1="276.5" y1="223.5" x2="282.5" y2="223.5" stroke="#ff00ff" stroke-width="1"/>
<line x1="279.5" y1="220.5" x2="279.5" y2="226.5" stroke="#ff00ff" stroke-width="1"/>
<line x1="282.5" y1="238.5" x2="288.5" y2="238.5" stroke="#ff00ff" stroke-width="1"/>
<line x1="285.5" y1="235.5" x2="285.5" y2="241.5" stroke="#ff00ff" stroke-width="1"/>
<line x1="276.5" y1="253.5" x2="282.5" y2="253.5" stroke="#ff00ff" stroke-width="1"/>
<line x1="279.5" y1="250.5" x2="279.5" y2="256.5" stroke="#ff00ff" stroke-width="1"/>
<line x1="265.5" y1="223.5" x2="300.5" y2="223.5" stroke="#ff00ff" stroke-width="1"/>
<rect x="313.5" y="169.5" width="121" height="109" rx="4" ry="4" stroke="#00ffff" fill="none"/>
<line x1="327.5" y1="169.5" x2="327.5" y2="278.5" stroke="#00ffff" stroke-width="1"/>
<line x1="416.5" y1="169.5" x2="416.5" y2="278.5" stroke="#00ffff" stroke-width="1"/>
<rect x="327.5" y="189.5" width="90" height="70" rx="3" ry="3" stroke="#00ffff" fill="none"/>
<line x1="328.5" y1="191.5" x2="417.5" y2="191.5" stroke="#00ffff" stroke-width="1"/>
<line x1="328.5" y1="257.5" x2="417.5" y2="257.5" stroke="#00ffff" stroke-width="1"/>
<line x1="328.5" y1="191.5" x2="328.5" y2="257.5" stroke="#00ffff" stroke-width="1"/>
<line x1="372.5" y1="191.5" x2="372.5" y2="257.5" stroke="#00ffff" stroke-width="1"/>
<rect x="373.5" y="203.5" width="4" height="42" stroke="#00ffff" stroke-width="1" fill="none"/>
<circle cx="355.5" cy="223.5" r="9.2" stroke="#00ffff" stroke-width="1.15" fill="none" shape-rendering="geometricPrecision"/>
<circle cx="344.5" cy="204.5" r="3.3" stroke="#00ffff" stroke-width="1.15" fill="none" shape-rendering="geometricPrecision"/>
<circle cx="344.5" cy="204.5" r="1.5" stroke="#00ffff" stroke-width="1.15" fill="none" shape-rendering="geometricPrecision"/>
<circle cx="366.5" cy="204.5" r="3.3" stroke="#00ffff" stroke-width="1.15" fill="none" shape-rendering="geometricPrecision"/>
<circle cx="366.5" cy="204.5" r="1.5" stroke="#00ffff" stroke-width="1.15" fill="none" shape-rendering="geometricPrecision"/>
<circle cx="344.5" cy="242.5" r="3.3" stroke="#00ffff" stroke-width="1.15" fill="none" shape-rendering="geometricPrecision"/>
<circle cx="344.5" cy="242.5" r="1.5" stroke="#00ffff" stroke-width="1.15" fill="none" shape-rendering="geometricPrecision"/>
<circle cx="366.5" cy="242.5" r="3.3" stroke="#00ffff" stroke-width="1.15" fill="none" shape-rendering="geometricPrecision"/>
<circle cx="366.5" cy="242.5" r="1.5" stroke="#00ffff" stroke-width="1.15" fill="none" shape-rendering="geometricPrecision"/>
<line x1="335.5" y1="204.5" x2="370.5" y2="204.5" stroke="#ff00ff" stroke-width="1"/>
<line x1="340.5" y1="214.5" x2="370.5" y2="214.5" stroke="#ff00ff" stroke-width="1"/>
<line x1="336.5" y1="233.5" x2="372.5" y2="233.5" stroke="#ff00ff" stroke-width="1"/>
<line x1="335.5" y1="242.5" x2="370.5" y2="242.5" stroke="#ff00ff" stroke-width="1"/>
<line x1="344.5" y1="197.5" x2="344.5" y2="250.5" stroke="#ff00ff" stroke-width="1"/>
<line x1="355.5" y1="197.5" x2="355.5" y2="250.5" stroke="#ff00ff" stroke-width="1"/>
<line x1="366.5" y1="197.5" x2="366.5" y2="250.5" stroke="#ff00ff" stroke-width="1"/>
<line x1="349.5" y1="223.5" x2="356.5" y2="223.5" stroke="#ff00ff" stroke-width="1"/>
<line x1="318.5" y1="223.5" x2="346.5" y2="223.5" stroke="#ff00ff" stroke-width="1"/>
<line x1="327.5" y1="193.5" x2="335.5" y2="193.5" stroke="#ff00ff" stroke-width="1"/>
<line x1="331.5" y1="190.5" x2="331.5" y2="196.5" stroke="#ff00ff" stroke-width="1"/>
<line x1="327.5" y1="254.5" x2="335.5" y2="254.5" stroke="#ff00ff" stroke-width="1"/>
<line x1="331.5" y1="251.5" x2="331.5" y2="257.5" stroke="#ff00ff" stroke-width="1"/>
<circle cx="381.5" cy="196.5" r="4.3" stroke="#00ffff" stroke-width="1.15" fill="none" shape-rendering="geometricPrecision"/>
<circle cx="381.5" cy="196.5" r="2" stroke="#00ffff" stroke-width="1.15" fill="none" shape-rendering="geometricPrecision"/>
<line x1="373.5" y1="196.5" x2="389.5" y2="196.5" stroke="#ff00ff" stroke-width="1"/>
<line x1="381.5" y1="191.5" x2="381.5" y2="201.5" stroke="#ff00ff" stroke-width="1"/>
<circle cx="381.5" cy="251.5" r="4.3" stroke="#00ffff" stroke-width="1.15" fill="none" shape-rendering="geometricPrecision"/>
<circle cx="381.5" cy="251.5" r="2" stroke="#00ffff" stroke-width="1.15" fill="none" shape-rendering="geometricPrecision"/>
<line x1="373.5" y1="251.5" x2="389.5" y2="251.5" stroke="#ff00ff" stroke-width="1"/>
<line x1="381.5" y1="246.5" x2="381.5" y2="256.5" stroke="#ff00ff" stroke-width="1"/>
<circle cx="397.5" cy="223.5" r="6.8" stroke="#00ffff" stroke-width="1.15" fill="none" shape-rendering="geometricPrecision"/>
<circle cx="397.5" cy="223.5" r="4.9" stroke="#00ffff" stroke-width="1.15" fill="none" shape-rendering="geometricPrecision"/>
<line x1="390.5" y1="211.5" x2="404.5" y2="211.5" stroke="#ff00ff" stroke-width="1"/>
<line x1="397.5" y1="207.5" x2="397.5" y2="215.5" stroke="#ff00ff" stroke-width="1"/>
<line x1="390.5" y1="236.5" x2="404.5" y2="236.5" stroke="#ff00ff" stroke-width="1"/>
<line x1="397.5" y1="232.5" x2="397.5" y2="240.5" stroke="#ff00ff" stroke-width="1"/>
<line x1="395.5" y1="193.5" x2="407.5" y2="193.5" stroke="#ff00ff" stroke-width="1"/>
<line x1="401.5" y1="189.5" x2="401.5" y2="197.5" stroke="#ff00ff" stroke-width="1"/>
<line x1="395.5" y1="254.5" x2="407.5" y2="254.5" stroke="#ff00ff" stroke-width="1"/>
<line x1="401.5" y1="250.5" x2="401.5" y2="258.5" stroke="#ff00ff" stroke-width="1"/>
<line x1="408.5" y1="198.5" x2="416.5" y2="198.5" stroke="#ff00ff" stroke-width="1"/>
<line x1="412.5" y1="194.5" x2="412.5" y2="202.5" stroke="#ff00ff" stroke-width="1"/>
<line x1="408.5" y1="223.5" x2="416.5" y2="223.5" stroke="#ff00ff" stroke-width="1"/>
<line x1="412.5" y1="219.5" x2="412.5" y2="227.5" stroke="#ff00ff" stroke-width="1"/>
<line x1="408.5" y1="249.5" x2="416.5" y2="249.5" stroke="#ff00ff" stroke-width="1"/>
<line x1="412.5" y1="245.5" x2="412.5" y2="253.5" stroke="#ff00ff" stroke-width="1"/>
<line x1="379.5" y1="223.5" x2="385.5" y2="223.5" stroke="#ff00ff" stroke-width="1"/>
<line x1="382.5" y1="219.5" x2="382.5" y2="227.5" stroke="#ff00ff" stroke-width="1"/>
<rect x="407.5" y="190.5" width="4" height="5" stroke="#00ffff" stroke-width="1" fill="none"/>
<rect x="407.5" y="252.5" width="4" height="5" stroke="#00ffff" stroke-width="1" fill="none"/>
<line x1="412.5" y1="192.5" x2="412.5" y2="256.5" stroke="#ff00ff" stroke-width="1" stroke-dasharray="8 3" stroke-linecap="butt"/>
<line x1="397.5" y1="205.5" x2="397.5" y2="242.5" stroke="#ff00ff" stroke-width="1"/>
<line x1="139.5" y1="76.5" x2="473.5" y2="76.5" stroke="#00ff00" stroke-width="1"/>
<line x1="138.5" y1="74.5" x2="138.5" y2="94.5" stroke="#00ff00" stroke-width="1"/>
<line x1="473.5" y1="74.5" x2="473.5" y2="94.5" stroke="#00ff00" stroke-width="1"/>
<text class="t" x="292.54" y="74.5" font-size="8.8" fill="#00ff00">200,63</text>
<line x1="139.5" y1="105.5" x2="442.5" y2="105.5" stroke="#00ff00" stroke-width="1"/>
<line x1="251.5" y1="103.5" x2="251.5" y2="123.5" stroke="#00ff00" stroke-width="1"/>
<line x1="442.5" y1="103.5" x2="442.5" y2="123.5" stroke="#00ff00" stroke-width="1"/>
<rect x="140" y="105" width="2" height="2" fill="#00ff00"/>
<rect x="248" y="105" width="2" height="2" fill="#00ff00"/>
<rect x="253" y="105" width="2" height="2" fill="#00ff00"/>
<rect x="439" y="105" width="2" height="2" fill="#00ff00"/>
<text class="t" x="186.44" y="104" font-size="8.8" fill="#00ff00">67,5</text>
<text class="t" x="339.66" y="104" font-size="8.8" fill="#00ff00">115</text>
<line x1="473.5" y1="94.5" x2="601.5" y2="94.5" stroke="#00ff00" stroke-width="1"/>
<line x1="473.5" y1="123.5" x2="582.5" y2="123.5" stroke="#00ff00" stroke-width="1"/>
<line x1="473.5" y1="161.5" x2="555.5" y2="161.5" stroke="#00ff00" stroke-width="1"/>
<line x1="473.5" y1="286.5" x2="555.5" y2="286.5" stroke="#00ff00" stroke-width="1"/>
<line x1="473.5" y1="323.5" x2="582.5" y2="323.5" stroke="#00ff00" stroke-width="1"/>
<line x1="473.5" y1="353.5" x2="604.5" y2="353.5" stroke="#00ff00" stroke-width="1"/>
<line x1="553.5" y1="161.5" x2="553.5" y2="286.5" stroke="#00ff00" stroke-width="1"/>
<line x1="579.5" y1="123.5" x2="579.5" y2="323.5" stroke="#00ff00" stroke-width="1"/>
<line x1="599.5" y1="94.5" x2="599.5" y2="353.5" stroke="#00ff00" stroke-width="1"/>
<text class="t" x="552.5" y="223" font-size="8.8" fill="#00ff00" text-anchor="middle" transform="rotate(-90 552.5 223)">75</text>
<text class="t" x="578.5" y="223" font-size="8.8" fill="#00ff00" text-anchor="middle" transform="rotate(-90 578.5 223)">120</text>
<text class="t" x="598.5" y="223" font-size="8.8" fill="#00ff00" text-anchor="middle" transform="rotate(-90 598.5 223)">155</text>
<text class="t" x="98" y="178" font-size="11" fill="#00ff00">4</text>
<line x1="114.5" y1="178.5" x2="277.5" y2="178.5" stroke="#00ff00" stroke-width="1"/>
<rect x="275.5" y="177.5" width="2" height="2" fill="#00ff00"/>
<text class="t" x="98" y="216" font-size="11" fill="#00ff00">3</text>
<line x1="114.5" y1="216.5" x2="277.5" y2="216.5" stroke="#00ff00" stroke-width="1"/>
<rect x="275.5" y="215.5" width="2" height="2" fill="#00ff00"/>
<text class="t" x="98" y="245" font-size="11" fill="#00ff00">2</text>
<line x1="114.5" y1="245.5" x2="264.5" y2="245.5" stroke="#00ff00" stroke-width="1"/>
<rect x="262.5" y="244.5" width="2" height="2" fill="#00ff00"/>
<text class="t" x="106" y="307" font-size="11" fill="#00ff00">1</text>
<line x1="117.5" y1="303.5" x2="134.5" y2="303.5" stroke="#00ff00" stroke-width="1"/>
<line x1="134.5" y1="303.5" x2="145.5" y2="288.5" stroke="#00ff00" stroke-width="1"/>
<text class="t" x="509.5" y="164" font-size="11" fill="#00ff00" textLength="11.4" lengthAdjust="spacingAndGlyphs">33</text>
<line x1="505.5" y1="163.5" x2="384.5" y2="195.5" stroke="#00ff00" stroke-width="1"/>
<rect x="383.5" y="194.5" width="2" height="2" fill="#00ff00"/>
<text class="t" x="504" y="188" font-size="11" fill="#00ff00" textLength="11.4" lengthAdjust="spacingAndGlyphs">34</text>
<line x1="501.5" y1="183.5" x2="410.5" y2="193.5" stroke="#00ff00" stroke-width="1"/>
<rect x="409.5" y="192.5" width="2" height="2" fill="#00ff00"/>
<text class="t" x="505.5" y="206" font-size="11" fill="#00ff00" textLength="11.4" lengthAdjust="spacingAndGlyphs">35</text>
<line x1="500.5" y1="200.5" x2="374.5" y2="205.5" stroke="#00ff00" stroke-width="1"/>
<rect x="373.5" y="204.5" width="2" height="2" fill="#00ff00"/>
<text class="t" x="507" y="222" font-size="11" fill="#00ff00" textLength="11.4" lengthAdjust="spacingAndGlyphs">36</text>
<line x1="500.5" y1="218.5" x2="364.5" y2="222.5" stroke="#00ff00" stroke-width="1"/>
<rect x="363.5" y="221.5" width="2" height="2" fill="#00ff00"/>
<text class="t" x="507" y="237" font-size="11" fill="#00ff00" textLength="11.4" lengthAdjust="spacingAndGlyphs">37</text>
<line x1="502.5" y1="234.5" x2="400.5" y2="225.5" stroke="#00ff00" stroke-width="1"/>
<rect x="399.5" y="224.5" width="2" height="2" fill="#00ff00"/>
<text class="t" x="507" y="254" font-size="11" fill="#00ff00" textLength="11.4" lengthAdjust="spacingAndGlyphs">38</text>
<line x1="501.5" y1="250.5" x2="377.5" y2="242.5" stroke="#00ff00" stroke-width="1"/>
<rect x="376.5" y="241.5" width="2" height="2" fill="#00ff00"/>
<text class="t" x="507" y="275" font-size="11" fill="#00ff00" textLength="11.4" lengthAdjust="spacingAndGlyphs">39</text>
<line x1="500.5" y1="274.5" x2="411.5" y2="248.5" stroke="#00ff00" stroke-width="1"/>
<rect x="410.5" y="247.5" width="2" height="2" fill="#00ff00"/>
<rect x="139" y="400" width="333" height="20" fill="url(#hb)"/>
<rect x="419" y="420" width="53" height="21" fill="url(#hb)"/>
<rect x="139" y="421" width="159" height="20" fill="url(#hf)"/>
<rect x="312" y="421" width="16" height="20" fill="url(#hf)"/>
<rect x="329" y="421" width="90" height="29" fill="url(#hb)"/>
<rect x="139" y="442" width="159" height="7" fill="url(#hb)"/>
<rect x="139" y="449" width="120" height="9" fill="url(#hb)"/>
<rect x="312" y="442" width="16" height="7" fill="url(#hb)"/>
<rect x="316" y="450" width="12" height="8" fill="url(#hf)"/>
<rect x="419" y="442" width="53" height="16" fill="url(#hf)"/>
<rect x="419" y="458" width="15" height="20" fill="url(#hf)"/>
<rect x="139" y="459" width="120" height="65" fill="url(#hf)"/>
<rect x="260" y="450" width="18" height="74" fill="url(#hb)"/>
<rect x="326" y="500" width="3" height="24" fill="url(#hf)"/>
<rect x="278" y="450" width="7" height="8" fill="url(#hf)"/>
<rect x="289" y="450" width="7" height="8" fill="url(#hf)"/>
<rect x="329" y="450" width="50" height="21" fill="url(#hb)"/>
<rect x="379" y="450" width="39" height="46" fill="url(#hb)"/>
<rect x="312" y="462" width="13" height="62" fill="url(#hb)"/>
<rect x="309" y="462" width="3" height="62" fill="url(#hb)"/>
<rect x="329" y="475" width="47" height="49" fill="url(#hf)"/>
<rect x="376" y="500" width="46" height="24" fill="url(#hf)"/>
<rect x="423" y="479" width="11" height="45" fill="url(#hb)"/>
<rect x="435" y="459" width="13" height="65" fill="url(#hf)"/>
<rect x="463" y="459" width="9" height="65" fill="url(#hf)"/>
<rect x="139" y="525" width="333" height="24" fill="url(#hb)"/>
<rect x="139" y="592" width="333" height="11" fill="url(#hf)"/>
<rect x="139" y="604" width="333" height="16" fill="url(#hb)"/>
<rect x="139" y="621" width="333" height="24" fill="url(#hf)"/>
<path d="M263.5 391.5 H348 V416 H350.5 V420 H260.5 V416 H263.5 Z" fill="#000"/>
<path d="M263.5 391.5 H348 V416 H350.5 V420 H260.5 V416 H263.5 Z" fill="url(#hfw)"/>
<path d="M272.5 392 L281 408.5 H330.5 L339 392 Z" fill="#000"/>
<path d="M294.5 409 H316 L323 415.5 V420 H313 V458 H298.5 V420 H288.5 V415.5 Z" fill="#000"/>
<path d="M294.5 409 H316 L323 415.5 V420 H313 V458 H298.5 V420 H288.5 V415.5 Z" fill="url(#hb2)"/>
<rect x="153" y="400" width="14" height="20" fill="#000"/>
<rect x="155" y="420" width="9" height="14" fill="#000"/>
<rect x="157" y="434" width="6" height="24" fill="#000"/>
<rect x="223" y="400" width="15" height="4" fill="#000"/>
<rect x="226" y="404" width="10" height="13" fill="#000"/>
<rect x="227" y="417" width="7" height="24" fill="#000"/>
<rect x="184" y="421" width="27" height="3" fill="#000"/>
<rect x="188" y="424" width="19" height="100" fill="#000"/>
<rect x="185" y="443" width="2" height="81" fill="#000"/>
<rect x="208" y="443" width="2" height="81" fill="#000"/>
<rect x="438" y="408" width="20" height="33" fill="#000"/>
<rect x="383" y="421" width="4" height="103" fill="#000"/>
<rect x="396" y="421" width="4" height="75" fill="#000"/>
<rect x="411" y="421" width="7" height="75" fill="#000"/>
<rect x="294" y="462" width="8" height="62" fill="#000"/>
<rect x="303" y="462" width="5" height="141" fill="#000"/>
<rect x="449" y="459" width="13" height="144" fill="#000"/>
<rect x="333" y="475" width="4" height="128" fill="#000"/>
<rect x="381" y="500" width="7" height="103" fill="#000"/>
<rect x="394" y="498" width="8" height="23" fill="#000"/>
<rect x="411" y="500" width="4" height="24" fill="#000"/>
<rect x="348" y="492" width="2" height="32" fill="#000"/>
<rect x="368" y="492" width="2" height="32" fill="#000"/>
<rect x="275" y="525" width="12" height="24" fill="#000"/>
<rect x="283" y="525" width="4" height="78" fill="#000"/>
<rect x="328" y="525" width="5" height="24" fill="#000"/>
<rect x="139" y="550" width="333" height="41" fill="#000"/>
<rect x="198" y="621" width="32" height="24" fill="#000"/>
<rect x="288" y="621" width="35" height="24" fill="#000"/>
<rect x="380" y="621" width="33" height="24" fill="#000"/>
<rect x="278" y="462" width="15" height="62" fill="url(#hx)"/>
<rect x="273" y="449" width="5" height="51" fill="#00ffff"/>
<rect x="285" y="449" width="4" height="10" fill="#00ffff"/>
<rect x="273" y="458" width="56" height="4" fill="#00ffff"/>
<rect x="325" y="458" width="4" height="42" fill="#00ffff"/>
<rect x="329" y="471" width="50" height="4" fill="#00ffff"/>
<rect x="375" y="471" width="4" height="29" fill="#00ffff"/>
<rect x="375" y="496" width="48" height="4" fill="#00ffff"/>
<rect x="419" y="478" width="4" height="22" fill="#00ffff"/>
<rect x="303" y="408" width="5" height="54" fill="#00ffff"/>
<rect x="297" y="408" width="17" height="2" fill="#00ffff"/>
<rect x="345" y="475" width="8" height="17" fill="#00ffff"/>
<rect x="366" y="475" width="7" height="17" fill="#00ffff"/>
<line x1="138.5" y1="399.5" x2="138.5" y2="645.5" stroke="#00ffff" stroke-width="1"/>
<line x1="472.5" y1="399.5" x2="472.5" y2="645.5" stroke="#00ffff" stroke-width="1"/>
<line x1="138.5" y1="645.5" x2="472.5" y2="645.5" stroke="#00ffff" stroke-width="1"/>
<line x1="138.5" y1="399.5" x2="263.5" y2="399.5" stroke="#00ffff" stroke-width="1"/>
<line x1="347.5" y1="399.5" x2="472.5" y2="399.5" stroke="#00ffff" stroke-width="1"/>
<line x1="138.5" y1="524.5" x2="472.5" y2="524.5" stroke="#00ffff" stroke-width="1"/>
<line x1="138.5" y1="549.5" x2="472.5" y2="549.5" stroke="#00ffff" stroke-width="1"/>
<line x1="138.5" y1="591.5" x2="472.5" y2="591.5" stroke="#00ffff" stroke-width="1"/>
<line x1="138.5" y1="603.5" x2="472.5" y2="603.5" stroke="#00ffff" stroke-width="1"/>
<line x1="138.5" y1="620.5" x2="472.5" y2="620.5" stroke="#00ffff" stroke-width="1"/>
<line x1="138.5" y1="420.5" x2="298.5" y2="420.5" stroke="#00ffff" stroke-width="1"/>
<line x1="313.5" y1="420.5" x2="472.5" y2="420.5" stroke="#00ffff" stroke-width="1"/>
<line x1="138.5" y1="441.5" x2="298.5" y2="441.5" stroke="#00ffff" stroke-width="1"/>
<line x1="312.5" y1="441.5" x2="328.5" y2="441.5" stroke="#00ffff" stroke-width="1"/>
<line x1="419.5" y1="441.5" x2="472.5" y2="441.5" stroke="#00ffff" stroke-width="1"/>
<line x1="138.5" y1="458.5" x2="187.5" y2="458.5" stroke="#00ffff" stroke-width="1"/>
<line x1="210.5" y1="458.5" x2="259.5" y2="458.5" stroke="#00ffff" stroke-width="1"/>
<line x1="434.5" y1="458.5" x2="472.5" y2="458.5" stroke="#00ffff" stroke-width="1"/>
<line x1="259.5" y1="449.5" x2="296.5" y2="449.5" stroke="#00ffff" stroke-width="1"/>
<line x1="315.5" y1="449.5" x2="434.5" y2="449.5" stroke="#00ffff" stroke-width="1"/>
<line x1="259.5" y1="454.5" x2="274.5" y2="454.5" stroke="#00ffff" stroke-width="1"/>
<line x1="259.5" y1="449.5" x2="259.5" y2="524.5" stroke="#00ffff" stroke-width="1"/>
<line x1="296.5" y1="449.5" x2="296.5" y2="458.5" stroke="#00ffff" stroke-width="1"/>
<line x1="315.5" y1="449.5" x2="315.5" y2="458.5" stroke="#00ffff" stroke-width="1"/>
<line x1="328.5" y1="420.5" x2="328.5" y2="472.5" stroke="#00ffff" stroke-width="1"/>
<line x1="434.5" y1="449.5" x2="434.5" y2="524.5" stroke="#00ffff" stroke-width="1"/>
<line x1="419.5" y1="478.5" x2="434.5" y2="478.5" stroke="#00ffff" stroke-width="1"/>
<line x1="422.5" y1="500.5" x2="422.5" y2="524.5" stroke="#00ffff" stroke-width="1"/>
<path d="M263.5 399.5 L263.5 391.5 L347.5 391.5 L347.5 399.5" stroke="#00ffff" stroke-width="1" fill="none"/>
<path d="M263.5 399.5 L263.5 416.5 L260.5 416.5 L260.5 420.5" stroke="#00ffff" stroke-width="1" fill="none"/>
<path d="M347.5 399.5 L347.5 416.5 L350.5 416.5 L350.5 420.5" stroke="#00ffff" stroke-width="1" fill="none"/>
<path d="M272.5 391.5 L281.5 408.5 L330.5 408.5 L339.5 391.5" stroke="#00ffff" stroke-width="1" fill="none"/>
<path d="M294.5 408.5 L288.5 415.5 L288.5 420.5 L298.5 420.5 L298.5 458.5" stroke="#00ffff" stroke-width="1" fill="none"/>
<path d="M316.5 408.5 L323.5 415.5 L323.5 420.5 L313.5 420.5 L313.5 458.5" stroke="#00ffff" stroke-width="1" fill="none"/>
<line x1="281.5" y1="408.5" x2="330.5" y2="408.5" stroke="#00ffff" stroke-width="1"/>
<line x1="152.5" y1="399.5" x2="152.5" y2="420.5" stroke="#00ffff" stroke-width="1"/>
<line x1="167.5" y1="399.5" x2="167.5" y2="420.5" stroke="#00ffff" stroke-width="1"/>
<line x1="152.5" y1="407.5" x2="166.5" y2="407.5" stroke="#00ffff" stroke-width="1"/>
<line x1="152.5" y1="412.5" x2="167.5" y2="412.5" stroke="#00ffff" stroke-width="1"/>
<line x1="166.5" y1="407.5" x2="166.5" y2="412.5" stroke="#00ffff" stroke-width="2"/>
<line x1="155.5" y1="412.5" x2="155.5" y2="437.5" stroke="#00ffff" stroke-width="1"/>
<line x1="164.5" y1="412.5" x2="164.5" y2="437.5" stroke="#00ffff" stroke-width="1"/>
<line x1="155.5" y1="434.5" x2="164.5" y2="434.5" stroke="#00ffff" stroke-width="1"/>
<line x1="156.5" y1="434.5" x2="156.5" y2="458.5" stroke="#00ffff" stroke-width="1"/>
<line x1="163.5" y1="434.5" x2="163.5" y2="458.5" stroke="#00ffff" stroke-width="1"/>
<path d="M222.5 399.5 L222.5 404.5 L225.5 404.5 L225.5 417.5 L226.5 417.5 L226.5 441.5" stroke="#00ffff" stroke-width="1" fill="none"/>
<path d="M238.5 399.5 L238.5 404.5 L236.5 404.5 L236.5 417.5 L234.5 417.5 L234.5 441.5" stroke="#00ffff" stroke-width="1" fill="none"/>
<line x1="225.5" y1="417.5" x2="236.5" y2="417.5" stroke="#00ffff" stroke-width="1"/>
<rect x="183.5" y="420.5" width="28" height="4" stroke="#00ffff" stroke-width="1" fill="none"/>
<line x1="187.5" y1="424.5" x2="187.5" y2="524.5" stroke="#00ffff" stroke-width="1"/>
<line x1="207.5" y1="424.5" x2="207.5" y2="524.5" stroke="#00ffff" stroke-width="1"/>
<line x1="184.5" y1="443.5" x2="184.5" y2="524.5" stroke="#00ffff" stroke-width="1"/>
<line x1="210.5" y1="443.5" x2="210.5" y2="524.5" stroke="#00ffff" stroke-width="1"/>
<path d="M183.5 441.5 L184.5 443.5" stroke="#00ffff" stroke-width="1" fill="none"/>
<line x1="184.5" y1="521.5" x2="187.5" y2="521.5" stroke="#00ffff" stroke-width="1"/>
<line x1="207.5" y1="521.5" x2="210.5" y2="521.5" stroke="#00ffff" stroke-width="1"/>
<rect x="185" y="447" width="2" height="1" fill="#00ffff"/>
<rect x="208" y="447" width="2" height="1" fill="#00ffff"/>
<rect x="185" y="452" width="2" height="1" fill="#00ffff"/>
<rect x="208" y="452" width="2" height="1" fill="#00ffff"/>
<rect x="185" y="457" width="2" height="1" fill="#00ffff"/>
<rect x="208" y="457" width="2" height="1" fill="#00ffff"/>
<rect x="185" y="462" width="2" height="1" fill="#00ffff"/>
<rect x="208" y="462" width="2" height="1" fill="#00ffff"/>
<rect x="185" y="467" width="2" height="1" fill="#00ffff"/>
<rect x="208" y="467" width="2" height="1" fill="#00ffff"/>
<rect x="185" y="472" width="2" height="1" fill="#00ffff"/>
<rect x="208" y="472" width="2" height="1" fill="#00ffff"/>
<rect x="185" y="477" width="2" height="1" fill="#00ffff"/>
<rect x="208" y="477" width="2" height="1" fill="#00ffff"/>
<rect x="185" y="482" width="2" height="1" fill="#00ffff"/>
<rect x="208" y="482" width="2" height="1" fill="#00ffff"/>
<rect x="185" y="487" width="2" height="1" fill="#00ffff"/>
<rect x="208" y="487" width="2" height="1" fill="#00ffff"/>
<rect x="185" y="492" width="2" height="1" fill="#00ffff"/>
<rect x="208" y="492" width="2" height="1" fill="#00ffff"/>
<rect x="185" y="497" width="2" height="1" fill="#00ffff"/>
<rect x="208" y="497" width="2" height="1" fill="#00ffff"/>
<rect x="185" y="502" width="2" height="1" fill="#00ffff"/>
<rect x="208" y="502" width="2" height="1" fill="#00ffff"/>
<rect x="185" y="507" width="2" height="1" fill="#00ffff"/>
<rect x="208" y="507" width="2" height="1" fill="#00ffff"/>
<rect x="185" y="512" width="2" height="1" fill="#00ffff"/>
<rect x="208" y="512" width="2" height="1" fill="#00ffff"/>
<rect x="185" y="517" width="2" height="1" fill="#00ffff"/>
<rect x="208" y="517" width="2" height="1" fill="#00ffff"/>
<rect x="437.5" y="408.5" width="21" height="33" stroke="#00ffff" stroke-width="1" fill="none"/>
<line x1="437.5" y1="409.5" x2="458.5" y2="409.5" stroke="#00ffff" stroke-width="1"/>
<path d="M455.5 411 L440.5 416.5 L455.5 422 L440.5 427.5 L455.5 433 L440.5 438.5" stroke="#00ffff" stroke-width="1" fill="none"/>
<path d="M455.5 413.2 L440.5 418.7 L455.5 424.2 L440.5 429.7 L455.5 435.2 L440.5 440.7" stroke="#00ffff" stroke-width="1" fill="none"/>
<rect x="440" y="408" width="6" height="2" fill="#00ffff"/>
<rect x="440" y="440" width="6" height="1" fill="#00ffff"/>
<rect x="450" y="419" width="5" height="3" fill="#00ffff"/>
<line x1="382.5" y1="420.5" x2="382.5" y2="496.5" stroke="#00ffff" stroke-width="1"/>
<line x1="387.5" y1="420.5" x2="387.5" y2="496.5" stroke="#00ffff" stroke-width="1"/>
<line x1="395.5" y1="420.5" x2="395.5" y2="496.5" stroke="#00ffff" stroke-width="1"/>
<line x1="400.5" y1="420.5" x2="400.5" y2="496.5" stroke="#00ffff" stroke-width="1"/>
<line x1="410.5" y1="420.5" x2="410.5" y2="496.5" stroke="#00ffff" stroke-width="1"/>
<line x1="414.5" y1="420.5" x2="414.5" y2="496.5" stroke="#00ffff" stroke-width="1"/>
<line x1="418.5" y1="420.5" x2="418.5" y2="478.5" stroke="#00ffff" stroke-width="1"/>
<line x1="417.5" y1="420.5" x2="417.5" y2="496.5" stroke="#0040ff" stroke-width="1" stroke-dasharray="2 2" stroke-linecap="butt"/>
<line x1="293.5" y1="462.5" x2="293.5" y2="524.5" stroke="#00ffff" stroke-width="1"/>
<line x1="302.5" y1="462.5" x2="302.5" y2="603.5" stroke="#00ffff" stroke-width="1"/>
<line x1="308.5" y1="462.5" x2="308.5" y2="603.5" stroke="#00ffff" stroke-width="1"/>
<line x1="312.5" y1="458.5" x2="312.5" y2="524.5" stroke="#00ffff" stroke-width="1"/>
<line x1="325.5" y1="500.5" x2="325.5" y2="524.5" stroke="#00ffff" stroke-width="1"/>
<line x1="277.5" y1="500.5" x2="277.5" y2="524.5" stroke="#00ffff" stroke-width="1"/>
<line x1="332.5" y1="475.5" x2="332.5" y2="603.5" stroke="#00ffff" stroke-width="1"/>
<line x1="337.5" y1="475.5" x2="337.5" y2="603.5" stroke="#00ffff" stroke-width="1"/>
<line x1="380.5" y1="500.5" x2="380.5" y2="603.5" stroke="#00ffff" stroke-width="1"/>
<line x1="388.5" y1="500.5" x2="388.5" y2="603.5" stroke="#00ffff" stroke-width="1"/>
<line x1="410.5" y1="500.5" x2="410.5" y2="524.5" stroke="#00ffff" stroke-width="1"/>
<line x1="415.5" y1="500.5" x2="415.5" y2="524.5" stroke="#00ffff" stroke-width="1"/>
<rect x="393.5" y="498.5" width="9" height="23" stroke="#00ffff" stroke-width="1" fill="none"/>
<line x1="392.5" y1="521.5" x2="403.5" y2="521.5" stroke="#00ffff" stroke-width="1"/>
<rect x="392" y="500" width="2" height="8" fill="#00ffff"/>
<rect x="402" y="500" width="2" height="8" fill="#00ffff"/>
<line x1="347.5" y1="492.5" x2="347.5" y2="524.5" stroke="#00ffff" stroke-width="1"/>
<line x1="350.5" y1="492.5" x2="350.5" y2="524.5" stroke="#00ffff" stroke-width="1"/>
<line x1="367.5" y1="492.5" x2="367.5" y2="524.5" stroke="#00ffff" stroke-width="1"/>
<line x1="370.5" y1="492.5" x2="370.5" y2="524.5" stroke="#00ffff" stroke-width="1"/>
<line x1="345.5" y1="521.5" x2="352.5" y2="521.5" stroke="#00ffff" stroke-width="1"/>
<line x1="365.5" y1="521.5" x2="372.5" y2="521.5" stroke="#00ffff" stroke-width="1"/>
<line x1="448.5" y1="458.5" x2="448.5" y2="603.5" stroke="#00ffff" stroke-width="1"/>
<line x1="462.5" y1="458.5" x2="462.5" y2="603.5" stroke="#00ffff" stroke-width="1"/>
<line x1="420.5" y1="524.5" x2="420.5" y2="549.5" stroke="#00ffff" stroke-width="1"/>
<line x1="274.5" y1="524.5" x2="274.5" y2="549.5" stroke="#00ffff" stroke-width="1"/>
<line x1="282.5" y1="524.5" x2="282.5" y2="603.5" stroke="#00ffff" stroke-width="1"/>
<line x1="287.5" y1="524.5" x2="287.5" y2="603.5" stroke="#00ffff" stroke-width="1"/>
<line x1="326.5" y1="524.5" x2="326.5" y2="549.5" stroke="#00ffff" stroke-width="1"/>
<line x1="148.5" y1="549.5" x2="148.5" y2="591.5" stroke="#00ffff" stroke-width="1"/>
<line x1="162.5" y1="549.5" x2="162.5" y2="591.5" stroke="#00ffff" stroke-width="1"/>
<line x1="280.5" y1="600.5" x2="289.5" y2="600.5" stroke="#00ffff" stroke-width="1"/>
<line x1="300.5" y1="600.5" x2="310.5" y2="600.5" stroke="#00ffff" stroke-width="1"/>
<line x1="330.5" y1="600.5" x2="339.5" y2="600.5" stroke="#00ffff" stroke-width="1"/>
<line x1="378.5" y1="600.5" x2="390.5" y2="600.5" stroke="#00ffff" stroke-width="1"/>
<line x1="446.5" y1="600.5" x2="464.5" y2="600.5" stroke="#00ffff" stroke-width="1"/>
<line x1="197.5" y1="620.5" x2="197.5" y2="645.5" stroke="#00ffff" stroke-width="1"/>
<line x1="230.5" y1="620.5" x2="230.5" y2="645.5" stroke="#00ffff" stroke-width="1"/>
<line x1="288.5" y1="620.5" x2="288.5" y2="645.5" stroke="#00ffff" stroke-width="1"/>
<line x1="322.5" y1="620.5" x2="322.5" y2="645.5" stroke="#00ffff" stroke-width="1"/>
<line x1="380.5" y1="620.5" x2="380.5" y2="645.5" stroke="#00ffff" stroke-width="1"/>
<line x1="413.5" y1="620.5" x2="413.5" y2="645.5" stroke="#00ffff" stroke-width="1"/>
<line x1="241.5" y1="466.5" x2="253.5" y2="466.5" stroke="#ff00ff" stroke-width="1"/>
<circle cx="247.5" cy="466.5" r="4.3" stroke="#00ffff" stroke-width="1.15" fill="none" shape-rendering="geometricPrecision"/>
<line x1="241.5" y1="491.5" x2="253.5" y2="491.5" stroke="#ff00ff" stroke-width="1"/>
<circle cx="247.5" cy="491.5" r="4.3" stroke="#00ffff" stroke-width="1.15" fill="none" shape-rendering="geometricPrecision"/>
<line x1="247.5" y1="460.5" x2="247.5" y2="500.5" stroke="#ff00ff" stroke-width="1"/>
<line x1="436.5" y1="466.5" x2="448.5" y2="466.5" stroke="#ff00ff" stroke-width="1"/>
<circle cx="442.5" cy="466.5" r="4.3" stroke="#00ffff" stroke-width="1.15" fill="none" shape-rendering="geometricPrecision"/>
<line x1="436.5" y1="491.5" x2="448.5" y2="491.5" stroke="#ff00ff" stroke-width="1"/>
<circle cx="442.5" cy="491.5" r="4.3" stroke="#00ffff" stroke-width="1.15" fill="none" shape-rendering="geometricPrecision"/>
<line x1="442.5" y1="460.5" x2="442.5" y2="500.5" stroke="#ff00ff" stroke-width="1"/>
<line x1="159.5" y1="391.5" x2="159.5" y2="463.5" stroke="#ff00ff" stroke-width="1" stroke-dasharray="32 3 6 3" stroke-linecap="butt"/>
<line x1="197.5" y1="391.5" x2="197.5" y2="535.5" stroke="#ff00ff" stroke-width="1" stroke-dasharray="32 3 6 3" stroke-linecap="butt"/>
<line x1="230.5" y1="395.5" x2="230.5" y2="447.5" stroke="#ff00ff" stroke-width="1" stroke-dasharray="32 3 6 3" stroke-linecap="butt"/>
<line x1="305.5" y1="378.5" x2="305.5" y2="645.5" stroke="#ff00ff" stroke-width="1" stroke-dasharray="32 3 6 3" stroke-linecap="butt"/>
<line x1="447.5" y1="404.5" x2="447.5" y2="447.5" stroke="#ff00ff" stroke-width="1" stroke-dasharray="32 3 6 3" stroke-linecap="butt"/>
<line x1="455.5" y1="450.5" x2="455.5" y2="613.5" stroke="#ff00ff" stroke-width="1" stroke-dasharray="32 3 6 3" stroke-linecap="butt"/>
<line x1="384.5" y1="415.5" x2="384.5" y2="612.5" stroke="#ff00ff" stroke-width="1" stroke-dasharray="32 3 6 3" stroke-linecap="butt"/>
<line x1="397.5" y1="415.5" x2="397.5" y2="533.5" stroke="#ff00ff" stroke-width="1" stroke-dasharray="32 3 6 3" stroke-linecap="butt"/>
<line x1="413.5" y1="415.5" x2="413.5" y2="530.5" stroke="#ff00ff" stroke-width="1" stroke-dasharray="32 3 6 3" stroke-linecap="butt"/>
<line x1="334.5" y1="470.5" x2="334.5" y2="610.5" stroke="#ff00ff" stroke-width="1" stroke-dasharray="32 3 6 3" stroke-linecap="butt"/>
<line x1="348.5" y1="470.5" x2="348.5" y2="531.5" stroke="#ff00ff" stroke-width="1"/>
<line x1="358.5" y1="470.5" x2="358.5" y2="531.5" stroke="#ff00ff" stroke-width="1"/>
<line x1="368.5" y1="470.5" x2="368.5" y2="531.5" stroke="#ff00ff" stroke-width="1"/>
<line x1="266.5" y1="444.5" x2="266.5" y2="459.5" stroke="#ff00ff" stroke-width="1"/>
<line x1="285.5" y1="445.5" x2="285.5" y2="461.5" stroke="#ff00ff" stroke-width="1"/>
<line x1="428.5" y1="435.5" x2="428.5" y2="464.5" stroke="#ff00ff" stroke-width="1"/>
<line x1="276.5" y1="520.5" x2="276.5" y2="552.5" stroke="#ff00ff" stroke-width="1"/>
<line x1="284.5" y1="520.5" x2="284.5" y2="610.5" stroke="#ff00ff" stroke-width="1" stroke-dasharray="32 3 6 3" stroke-linecap="butt"/>
<line x1="326.5" y1="520.5" x2="326.5" y2="552.5" stroke="#ff00ff" stroke-width="1"/>
<line x1="422.5" y1="520.5" x2="422.5" y2="553.5" stroke="#ff00ff" stroke-width="1"/>
<line x1="155.5" y1="544.5" x2="155.5" y2="597.5" stroke="#ff00ff" stroke-width="1" stroke-dasharray="32 3 6 3" stroke-linecap="butt"/>
<line x1="172.5" y1="581.5" x2="172.5" y2="626.5" stroke="#ff00ff" stroke-width="1"/>
<line x1="438.5" y1="581.5" x2="438.5" y2="626.5" stroke="#ff00ff" stroke-width="1"/>
<line x1="213.5" y1="612.5" x2="213.5" y2="650.5" stroke="#ff00ff" stroke-width="1" stroke-dasharray="32 3 6 3" stroke-linecap="butt"/>
<line x1="397.5" y1="612.5" x2="397.5" y2="650.5" stroke="#ff00ff" stroke-width="1" stroke-dasharray="32 3 6 3" stroke-linecap="butt"/>
<line x1="61.5" y1="399.5" x2="138.5" y2="399.5" stroke="#00ff00" stroke-width="1"/>
<line x1="61.5" y1="645.5" x2="138.5" y2="645.5" stroke="#00ff00" stroke-width="1"/>
<line x1="64.5" y1="399.5" x2="64.5" y2="645.5" stroke="#00ff00" stroke-width="1"/>
<text class="t" x="62" y="522" font-size="8.8" fill="#00ff00" text-anchor="middle" transform="rotate(-90 62 522)">147,5</text>
<text class="t" x="71.76" y="412" font-size="11" fill="#00ff00">13</text>
<line x1="89.5" y1="412.5" x2="144.5" y2="412.5" stroke="#00ff00" stroke-width="1"/>
<path d="M139 410.8 L145 412.5 L139 414.2 Z" fill="#00ff00" shape-rendering="geometricPrecision"/>
<text class="t" x="71.76" y="432" font-size="11" fill="#00ff00">12</text>
<line x1="89.5" y1="431.5" x2="148.5" y2="431.5" stroke="#00ff00" stroke-width="1"/>
<path d="M143 429.8 L149 431.5 L143 433.2 Z" fill="#00ff00" shape-rendering="geometricPrecision"/>
<text class="t" x="71.76" y="454" font-size="11" fill="#00ff00">11</text>
<line x1="86.5" y1="452.5" x2="146.5" y2="452.5" stroke="#00ff00" stroke-width="1"/>
<path d="M141 450.8 L147 452.5 L141 454.2 Z" fill="#00ff00" shape-rendering="geometricPrecision"/>
<text class="t" x="71.76" y="503" font-size="11" fill="#00ff00">10</text>
<line x1="91.5" y1="499.5" x2="144.5" y2="499.5" stroke="#00ff00" stroke-width="1"/>
<path d="M139 497.8 L145 499.5 L139 501.2 Z" fill="#00ff00" shape-rendering="geometricPrecision"/>
<text class="t" x="79.88" y="544" font-size="11" fill="#00ff00">9</text>
<line x1="91.5" y1="538.5" x2="148.5" y2="538.5" stroke="#00ff00" stroke-width="1"/>
<path d="M143 536.8 L149 538.5 L143 540.2 Z" fill="#00ff00" shape-rendering="geometricPrecision"/>
<text class="t" x="79.88" y="577" font-size="11" fill="#00ff00">8</text>
<line x1="92.5" y1="573.5" x2="147.5" y2="573.5" stroke="#00ff00" stroke-width="1"/>
<path d="M142 571.8 L148 573.5 L142 575.2 Z" fill="#00ff00" shape-rendering="geometricPrecision"/>
<text class="t" x="79.88" y="600" font-size="11" fill="#00ff00">7</text>
<line x1="91.5" y1="599.5" x2="144.5" y2="599.5" stroke="#00ff00" stroke-width="1"/>
<path d="M139 597.8 L145 599.5 L139 601.2 Z" fill="#00ff00" shape-rendering="geometricPrecision"/>
<text class="t" x="79.88" y="615" font-size="11" fill="#00ff00">6</text>
<line x1="92.5" y1="613.5" x2="144.5" y2="613.5" stroke="#00ff00" stroke-width="1"/>
<path d="M139 611.8 L145 613.5 L139 615.2 Z" fill="#00ff00" shape-rendering="geometricPrecision"/>
<text class="t" x="81.88" y="640" font-size="11" fill="#00ff00">5</text>
<line x1="94.5" y1="636.5" x2="149.5" y2="636.5" stroke="#00ff00" stroke-width="1"/>
<path d="M144 634.8 L150 636.5 L144 638.2 Z" fill="#00ff00" shape-rendering="geometricPrecision"/>
<text class="t" x="139" y="379" font-size="11" fill="#00ff00">14</text>
<path d="M139.5 382.5 L152.5 382.5 L158.5 408.5" stroke="#00ff00" stroke-width="1" fill="none"/>
<text class="t" x="180" y="365" font-size="11" fill="#00ff00">17</text>
<text class="t" x="180" y="380" font-size="11" fill="#00ff00">16</text>
<text class="t" x="180" y="392" font-size="11" fill="#00ff00">15</text>
<line x1="179.5" y1="369.5" x2="191.5" y2="369.5" stroke="#00ff00" stroke-width="1"/>
<line x1="179.5" y1="380.5" x2="191.5" y2="380.5" stroke="#00ff00" stroke-width="1"/>
<line x1="178.5" y1="392.5" x2="191.5" y2="392.5" stroke="#00ff00" stroke-width="1"/>
<line x1="191.5" y1="369.5" x2="191.5" y2="393.5" stroke="#00ff00" stroke-width="1"/>
<line x1="191.5" y1="393.5" x2="201.5" y2="422.5" stroke="#00ff00" stroke-width="1"/>
<text class="t" x="231" y="371" font-size="11" fill="#00ff00">19</text>
<text class="t" x="231" y="387" font-size="11" fill="#00ff00">18</text>
<line x1="231.5" y1="374.5" x2="244.5" y2="374.5" stroke="#00ff00" stroke-width="1"/>
<line x1="231.5" y1="388.5" x2="244.5" y2="388.5" stroke="#00ff00" stroke-width="1"/>
<line x1="244.5" y1="374.5" x2="244.5" y2="388.5" stroke="#00ff00" stroke-width="1"/>
<line x1="244.5" y1="388.5" x2="269.5" y2="432.5" stroke="#00ff00" stroke-width="1"/>
<line x1="269.5" y1="432.5" x2="279.5" y2="452.5" stroke="#00ff00" stroke-width="1"/>
<text class="t" x="255" y="368" font-size="11" fill="#00ff00">20</text>
<path d="M252.5 371.5 L263.5 371.5 L269.5 399.5" stroke="#00ff00" stroke-width="1" fill="none"/>
<text class="t" x="279" y="368" font-size="11" fill="#00ff00">21</text>
<path d="M277.5 371.5 L290.5 371.5 L301.5 408.5" stroke="#00ff00" stroke-width="1" fill="none"/>
<text class="t" x="340" y="370" font-size="11" fill="#00ff00">22</text>
<path d="M337.5 372.5 L352.5 372.5 L369.5 427.5" stroke="#00ff00" stroke-width="1" fill="none"/>
<text class="t" x="364" y="365" font-size="11" fill="#00ff00">23</text>
<path d="M363.5 371.5 L376.5 371.5 L384.5 415.5" stroke="#00ff00" stroke-width="1" fill="none"/>
<text class="t" x="400" y="370" font-size="11" fill="#00ff00">24</text>
<path d="M413.5 372.5 L398.5 372.5 L392.5 455.5" stroke="#00ff00" stroke-width="1" fill="none"/>
<text class="t" x="420" y="370" font-size="11" fill="#00ff00">25</text>
<path d="M432.5 372.5 L420.5 372.5 L398.5 420.5" stroke="#00ff00" stroke-width="1" fill="none"/>
<text class="t" x="440" y="373" font-size="11" fill="#00ff00">26</text>
<path d="M452.5 376.5 L437.5 376.5 L416.5 419.5" stroke="#00ff00" stroke-width="1" fill="none"/>
<text class="t" x="475" y="375" font-size="11" fill="#00ff00">27</text>
<path d="M490.5 375.5 L471.5 375.5 L454.5 409.5" stroke="#00ff00" stroke-width="1" fill="none"/>
<text class="t" x="509" y="433" font-size="11" fill="#00ff00">28</text>
<path d="M508.5 429.5 L484.5 429.5 L435.5 451.5" stroke="#00ff00" stroke-width="1" fill="none"/>
<text class="t" x="501" y="486" font-size="11" fill="#00ff00">29</text>
<path d="M499.5 481.5 L430.5 496.5" stroke="#00ff00" stroke-width="1" fill="none"/>
<text class="t" x="501" y="503" font-size="11" fill="#00ff00">30</text>
<path d="M498.5 498.5 L418.5 512.5" stroke="#00ff00" stroke-width="1" fill="none"/>
<text class="t" x="504" y="533" font-size="11" fill="#00ff00">31</text>
<path d="M498.5 532.5 L456.5 539.5" stroke="#00ff00" stroke-width="1" fill="none"/>
<text class="t" x="499" y="567" font-size="11" fill="#00ff00">32</text>
<path d="M498.5 562.5 L451.5 562.5 L430.5 565.5 L307.5 570.5" stroke="#00ff00" stroke-width="1" fill="none"/>
<line x1="473.5" y1="399.5" x2="541.5" y2="399.5" stroke="#00ff00" stroke-width="1"/>
<line x1="473.5" y1="420.5" x2="541.5" y2="420.5" stroke="#00ff00" stroke-width="1"/>
<line x1="473.5" y1="441.5" x2="541.5" y2="441.5" stroke="#00ff00" stroke-width="1"/>
<line x1="473.5" y1="458.5" x2="541.5" y2="458.5" stroke="#00ff00" stroke-width="1"/>
<line x1="473.5" y1="524.5" x2="541.5" y2="524.5" stroke="#00ff00" stroke-width="1"/>
<line x1="473.5" y1="549.5" x2="541.5" y2="549.5" stroke="#00ff00" stroke-width="1"/>
<line x1="473.5" y1="591.5" x2="541.5" y2="591.5" stroke="#00ff00" stroke-width="1"/>
<line x1="473.5" y1="603.5" x2="499.5" y2="603.5" stroke="#00ff00" stroke-width="1"/>
<line x1="473.5" y1="620.5" x2="499.5" y2="620.5" stroke="#00ff00" stroke-width="1"/>
<line x1="473.5" y1="645.5" x2="499.5" y2="645.5" stroke="#00ff00" stroke-width="1"/>
<line x1="539.5" y1="399.5" x2="539.5" y2="591.5" stroke="#00ff00" stroke-width="1"/>
<line x1="497.5" y1="572.5" x2="497.5" y2="645.5" stroke="#00ff00" stroke-width="1"/>
<text class="t" x="538" y="410.5" font-size="8.8" fill="#00ff00" text-anchor="middle" transform="rotate(-90 538 410.5)">12,5</text>
<text class="t" x="538" y="432" font-size="8.8" fill="#00ff00" text-anchor="middle" transform="rotate(-90 538 432)">12,5</text>
<text class="t" x="538" y="451" font-size="8.8" fill="#00ff00" text-anchor="middle" transform="rotate(-90 538 451)">10</text>
<text class="t" x="538" y="491" font-size="8.8" fill="#00ff00" text-anchor="middle" transform="rotate(-90 538 491)">40</text>
<text class="t" x="538" y="537" font-size="8.8" fill="#00ff00" text-anchor="middle" transform="rotate(-90 538 537)">15</text>
<text class="t" x="538" y="570" font-size="8.8" fill="#00ff00" text-anchor="middle" transform="rotate(-90 538 570)">25,08</text>
<text class="t" x="495" y="580" font-size="8.8" fill="#00ff00" text-anchor="middle" transform="rotate(-90 495 580)">7,42</text>
<text class="t" x="495" y="612" font-size="8.8" fill="#00ff00" text-anchor="middle" transform="rotate(-90 495 612)">10</text>
<text class="t" x="495" y="633" font-size="8.8" fill="#00ff00" text-anchor="middle" transform="rotate(-90 495 633)">15</text>
<text class="t" x="745.16" y="97" font-size="9.6" fill="#ffff00">35</text>
<text class="t" x="780.8" y="97" font-size="8.5" fill="#ffff00">动模镶件<tspan font-size="9.6">E</tspan></text>
<text class="t" x="850.83" y="97" font-size="9.6" fill="#ffff00">4</text>
<text class="t" x="872.6" y="97" font-size="9.6" fill="#ffff00">Cr12</text>
<text class="t" x="913.76" y="97" font-size="8.5" fill="#ffff00">调质<tspan font-size="9.6">60HRC</tspan></text>
<line x1="740.5" y1="102.5" x2="973.5" y2="102.5" stroke="#00ffff" stroke-width="1"/>
<text class="t" x="745.16" y="112.01" font-size="9.6" fill="#ffff00">34</text>
<text class="t" x="780.53" y="112.01" font-size="8.5" fill="#ffff00">动模镶件<tspan font-size="9.6">D</tspan></text>
<text class="t" x="850.83" y="112.01" font-size="9.6" fill="#ffff00">4</text>
<text class="t" x="872.6" y="112.01" font-size="9.6" fill="#ffff00">Cr12</text>
<text class="t" x="913.76" y="112.01" font-size="8.5" fill="#ffff00">调质<tspan font-size="9.6">60HRC</tspan></text>
<line x1="740.5" y1="117.5" x2="973.5" y2="117.5" stroke="#00ffff" stroke-width="1"/>
<text class="t" x="745.16" y="127.03" font-size="9.6" fill="#ffff00">33</text>
<text class="t" x="789.3" y="127.03" font-size="8.5" fill="#ffff00">顶杆<tspan font-size="9.6">A</tspan></text>
<text class="t" x="850.83" y="127.03" font-size="9.6" fill="#ffff00">2</text>
<text class="t" x="877.66" y="127.03" font-size="9.6" fill="#ffff00">45</text>
<line x1="740.5" y1="132.5" x2="973.5" y2="132.5" stroke="#00ffff" stroke-width="1"/>
<text class="t" x="745.16" y="142.04" font-size="9.6" fill="#ffff00">32</text>
<text class="t" x="788.25" y="142.04" font-size="8.5" fill="#ffff00">拉料杆</text>
<text class="t" x="850.83" y="142.04" font-size="9.6" fill="#ffff00">1</text>
<text class="t" x="874.73" y="142.04" font-size="9.6" fill="#ffff00">T12</text>
<text class="t" x="913.76" y="142.04" font-size="8.5" fill="#ffff00">淬火<tspan font-size="9.6">50HRC</tspan></text>
<line x1="740.5" y1="147.5" x2="973.5" y2="147.5" stroke="#00ffff" stroke-width="1"/>
<text class="t" x="745.16" y="157.05" font-size="9.6" fill="#ffff00">31</text>
<text class="t" x="788.25" y="157.05" font-size="8.5" fill="#ffff00">复位杆</text>
<text class="t" x="850.83" y="157.05" font-size="9.6" fill="#ffff00">4</text>
<text class="t" x="877.66" y="157.05" font-size="9.6" fill="#ffff00">45</text>
<line x1="740.5" y1="162.5" x2="973.5" y2="162.5" stroke="#00ffff" stroke-width="1"/>
<text class="t" x="745.16" y="172.06" font-size="9.6" fill="#ffff00">30</text>
<text class="t" x="784" y="172.06" font-size="8.5" fill="#ffff00">动模型芯</text>
<text class="t" x="850.83" y="172.06" font-size="9.6" fill="#ffff00">1</text>
<text class="t" x="862.73" y="178.06" font-size="9.6" fill="#ffff00">Cr12MoV</text>
<text class="t" x="908.25" y="172.06" font-size="8.5" fill="#ffff00">淬火加低温回火</text>
<line x1="740.5" y1="177.5" x2="973.5" y2="177.5" stroke="#00ffff" stroke-width="1"/>
<text class="t" x="745.16" y="187.08" font-size="9.6" fill="#ffff00">29</text>
<text class="t" x="784" y="187.08" font-size="8.5" fill="#ffff00">动模镶套</text>
<text class="t" x="850.83" y="187.08" font-size="9.6" fill="#ffff00">1</text>
<text class="t" x="877.66" y="187.08" font-size="9.6" fill="#ffff00">45</text>
<line x1="740.5" y1="192.5" x2="973.5" y2="192.5" stroke="#00ffff" stroke-width="1"/>
<text class="t" x="745.16" y="202.09" font-size="9.6" fill="#ffff00">28</text>
<text class="t" x="784" y="202.09" font-size="8.5" fill="#ffff00">定模镶套</text>
<text class="t" x="850.83" y="202.09" font-size="9.6" fill="#ffff00">1</text>
<text class="t" x="877.66" y="202.09" font-size="9.6" fill="#ffff00">45</text>
<line x1="740.5" y1="207.5" x2="973.5" y2="207.5" stroke="#00ffff" stroke-width="1"/>
<text class="t" x="745.16" y="217.1" font-size="9.6" fill="#ffff00">27</text>
<text class="t" x="792.5" y="217.1" font-size="8.5" fill="#ffff00">弹簧</text>
<text class="t" x="850.83" y="217.1" font-size="9.6" fill="#ffff00">4</text>
<text class="t" x="866.73" y="217.1" font-size="9.6" fill="#ffff00">60SiMn</text>
<text class="t" x="908.25" y="217.1" font-size="8.5" fill="#ffff00">淬火加中温回火</text>
<line x1="740.5" y1="222.5" x2="973.5" y2="222.5" stroke="#00ffff" stroke-width="1"/>
<text class="t" x="745.16" y="232.12" font-size="9.6" fill="#ffff00">26</text>
<text class="t" x="781.07" y="232.12" font-size="8.5" fill="#ffff00">定模镶块<tspan font-size="9.6">F</tspan></text>
<text class="t" x="850.83" y="232.12" font-size="9.6" fill="#ffff00">1</text>
<text class="t" x="872.6" y="232.12" font-size="9.6" fill="#ffff00">Cr12</text>
<text class="t" x="913.76" y="232.12" font-size="8.5" fill="#ffff00">调质<tspan font-size="9.6">60HRC</tspan></text>
<line x1="740.5" y1="237.5" x2="973.5" y2="237.5" stroke="#00ffff" stroke-width="1"/>
<text class="t" x="745.16" y="247.13" font-size="9.6" fill="#ffff00">25</text>
<text class="t" x="780.8" y="247.13" font-size="8.5" fill="#ffff00">定模镶块<tspan font-size="9.6">E</tspan></text>
<text class="t" x="850.83" y="247.13" font-size="9.6" fill="#ffff00">1</text>
<text class="t" x="872.6" y="247.13" font-size="9.6" fill="#ffff00">Cr12</text>
<text class="t" x="913.76" y="247.13" font-size="8.5" fill="#ffff00">调质<tspan font-size="9.6">60HRC</tspan></text>
<line x1="740.5" y1="252.5" x2="973.5" y2="252.5" stroke="#00ffff" stroke-width="1"/>
<text class="t" x="745.16" y="262.14" font-size="9.6" fill="#ffff00">24</text>
<text class="t" x="780.53" y="262.14" font-size="8.5" fill="#ffff00">定模镶块<tspan font-size="9.6">D</tspan></text>
<text class="t" x="850.83" y="262.14" font-size="9.6" fill="#ffff00">1</text>
<text class="t" x="872.6" y="262.14" font-size="9.6" fill="#ffff00">Cr12</text>
<text class="t" x="913.76" y="262.14" font-size="8.5" fill="#ffff00">调质<tspan font-size="9.6">60HRC</tspan></text>
<line x1="740.5" y1="267.5" x2="973.5" y2="267.5" stroke="#00ffff" stroke-width="1"/>
<text class="t" x="745.16" y="277.16" font-size="9.6" fill="#ffff00">23</text>
<text class="t" x="780.53" y="277.16" font-size="8.5" fill="#ffff00">定模镶块<tspan font-size="9.6">C</tspan></text>
<text class="t" x="850.83" y="277.16" font-size="9.6" fill="#ffff00">1</text>
<text class="t" x="872.6" y="277.16" font-size="9.6" fill="#ffff00">Cr12</text>
<text class="t" x="913.76" y="277.16" font-size="8.5" fill="#ffff00">调质<tspan font-size="9.6">60HRC</tspan></text>
<line x1="740.5" y1="282.5" x2="973.5" y2="282.5" stroke="#00ffff" stroke-width="1"/>
<text class="t" x="745.16" y="292.17" font-size="9.6" fill="#ffff00">22</text>
<text class="t" x="771.25" y="292.17" font-size="8.5" fill="#ffff00">定模型芯固定板</text>
<text class="t" x="850.83" y="292.17" font-size="9.6" fill="#ffff00">1</text>
<text class="t" x="877.66" y="292.17" font-size="9.6" fill="#ffff00">45</text>
<text class="t" x="913.76" y="292.17" font-size="8.5" fill="#ffff00">淬火<tspan font-size="9.6">50HRC</tspan></text>
<line x1="740.5" y1="297.5" x2="973.5" y2="297.5" stroke="#00ffff" stroke-width="1"/>
<text class="t" x="745.16" y="307.18" font-size="9.6" fill="#ffff00">21</text>
<text class="t" x="788.25" y="307.18" font-size="8.5" fill="#ffff00">浇口套</text>
<text class="t" x="850.83" y="307.18" font-size="9.6" fill="#ffff00">1</text>
<text class="t" x="871.53" y="307.18" font-size="9.6" fill="#ffff00">T10A</text>
<text class="t" x="913.76" y="307.18" font-size="8.5" fill="#ffff00">淬火<tspan font-size="9.6">40HRC</tspan></text>
<line x1="740.5" y1="312.5" x2="973.5" y2="312.5" stroke="#00ffff" stroke-width="1"/>
<text class="t" x="745.16" y="322.19" font-size="9.6" fill="#ffff00">20</text>
<text class="t" x="788.25" y="322.19" font-size="8.5" fill="#ffff00">定位圈</text>
<text class="t" x="850.83" y="322.19" font-size="9.6" fill="#ffff00">1</text>
<text class="t" x="871.53" y="322.19" font-size="9.6" fill="#ffff00">T10A</text>
<text class="t" x="913.76" y="322.19" font-size="8.5" fill="#ffff00">淬火<tspan font-size="9.6">40HRC</tspan></text>
<line x1="740.5" y1="327.5" x2="973.5" y2="327.5" stroke="#00ffff" stroke-width="1"/>
<text class="t" x="745.16" y="337.21" font-size="9.6" fill="#ffff00">19</text>
<text class="t" x="780.8" y="337.21" font-size="8.5" fill="#ffff00">定模镶件<tspan font-size="9.6">B</tspan></text>
<text class="t" x="850.83" y="337.21" font-size="9.6" fill="#ffff00">1</text>
<text class="t" x="872.6" y="337.21" font-size="9.6" fill="#ffff00">Cr12</text>
<text class="t" x="913.76" y="337.21" font-size="8.5" fill="#ffff00">调质<tspan font-size="9.6">60HRC</tspan></text>
<line x1="740.5" y1="342.5" x2="973.5" y2="342.5" stroke="#00ffff" stroke-width="1"/>
<text class="t" x="745.16" y="352.22" font-size="9.6" fill="#ffff00">18</text>
<text class="t" x="780.8" y="352.22" font-size="8.5" fill="#ffff00">定模镶件<tspan font-size="9.6">A</tspan></text>
<text class="t" x="850.83" y="352.22" font-size="9.6" fill="#ffff00">1</text>
<text class="t" x="872.6" y="352.22" font-size="9.6" fill="#ffff00">Cr12</text>
<text class="t" x="913.76" y="352.22" font-size="8.5" fill="#ffff00">调质<tspan font-size="9.6">60HRC</tspan></text>
<line x1="740.5" y1="357.5" x2="973.5" y2="357.5" stroke="#00ffff" stroke-width="1"/>
<text class="t" x="745.16" y="367.23" font-size="9.6" fill="#ffff00">17</text>
<text class="t" x="792.5" y="367.23" font-size="8.5" fill="#ffff00">导套</text>
<text class="t" x="850.83" y="367.23" font-size="9.6" fill="#ffff00">2</text>
<text class="t" x="877.66" y="367.23" font-size="9.6" fill="#ffff00">45</text>
<text class="t" x="908.25" y="367.23" font-size="8.5" fill="#ffff00">淬火加低温回火</text>
<line x1="740.5" y1="372.5" x2="973.5" y2="372.5" stroke="#00ffff" stroke-width="1"/>
<text class="t" x="745.16" y="382.25" font-size="9.6" fill="#ffff00">16</text>
<text class="t" x="792.5" y="382.25" font-size="8.5" fill="#ffff00">衬套</text>
<text class="t" x="850.83" y="382.25" font-size="9.6" fill="#ffff00">2</text>
<text class="t" x="877.66" y="382.25" font-size="9.6" fill="#ffff00">45</text>
<text class="t" x="913.76" y="382.25" font-size="8.5" fill="#ffff00">调质<tspan font-size="9.6">60HRC</tspan></text>
<line x1="740.5" y1="387.5" x2="973.5" y2="387.5" stroke="#00ffff" stroke-width="1"/>
<text class="t" x="745.16" y="397.26" font-size="9.6" fill="#ffff00">15</text>
<text class="t" x="792.5" y="397.26" font-size="8.5" fill="#ffff00">导柱</text>
<text class="t" x="850.83" y="397.26" font-size="9.6" fill="#ffff00">2</text>
<text class="t" x="877.66" y="397.26" font-size="9.6" fill="#ffff00">45</text>
<text class="t" x="913.76" y="397.26" font-size="8.5" fill="#ffff00">淬火<tspan font-size="9.6">40HRC</tspan></text>
<line x1="740.5" y1="402.5" x2="973.5" y2="402.5" stroke="#00ffff" stroke-width="1"/>
<text class="t" x="745.16" y="412.27" font-size="9.6" fill="#ffff00">14</text>
<text class="t" x="784" y="412.27" font-size="8.5" fill="#ffff00">限位螺钉</text>
<text class="t" x="850.83" y="412.27" font-size="9.6" fill="#ffff00">4</text>
<text class="t" x="877.66" y="412.27" font-size="9.6" fill="#ffff00">45</text>
<text class="t" x="913.76" y="412.27" font-size="8.5" fill="#ffff00">调质<tspan font-size="9.6">30HRC</tspan></text>
<line x1="740.5" y1="417.5" x2="973.5" y2="417.5" stroke="#00ffff" stroke-width="1"/>
<text class="t" x="745.16" y="427.29" font-size="9.6" fill="#ffff00">13</text>
<text class="t" x="784" y="427.29" font-size="8.5" fill="#ffff00">定模座板</text>
<text class="t" x="850.83" y="427.29" font-size="9.6" fill="#ffff00">1</text>
<text class="t" x="877.66" y="427.29" font-size="9.6" fill="#ffff00">45</text>
<line x1="740.5" y1="432.5" x2="973.5" y2="432.5" stroke="#00ffff" stroke-width="1"/>
<text class="t" x="745.16" y="442.3" font-size="9.6" fill="#ffff00">12</text>
<text class="t" x="788.25" y="442.3" font-size="8.5" fill="#ffff00">定模板</text>
<text class="t" x="850.83" y="442.3" font-size="9.6" fill="#ffff00">1</text>
<text class="t" x="877.66" y="442.3" font-size="9.6" fill="#ffff00">45</text>
<line x1="740.5" y1="447.5" x2="973.5" y2="447.5" stroke="#00ffff" stroke-width="1"/>
<text class="t" x="745.16" y="457.31" font-size="9.6" fill="#ffff00">11</text>
<text class="t" x="788.25" y="457.31" font-size="8.5" fill="#ffff00">卸料板</text>
<text class="t" x="850.83" y="457.31" font-size="9.6" fill="#ffff00">1</text>
<text class="t" x="877.66" y="457.31" font-size="9.6" fill="#ffff00">45</text>
<line x1="740.5" y1="462.5" x2="973.5" y2="462.5" stroke="#00ffff" stroke-width="1"/>
<text class="t" x="745.16" y="472.32" font-size="9.6" fill="#ffff00">10</text>
<text class="t" x="788.25" y="472.32" font-size="8.5" fill="#ffff00">动模板</text>
<text class="t" x="850.83" y="472.32" font-size="9.6" fill="#ffff00">1</text>
<text class="t" x="877.66" y="472.32" font-size="9.6" fill="#ffff00">45</text>
<text class="t" x="913.76" y="472.32" font-size="8.5" fill="#ffff00">淬火<tspan font-size="9.6">50HRC</tspan></text>
<line x1="740.5" y1="477.5" x2="973.5" y2="477.5" stroke="#00ffff" stroke-width="1"/>
<text class="t" x="747.83" y="487.34" font-size="9.6" fill="#ffff00">9</text>
<text class="t" x="784" y="487.34" font-size="8.5" fill="#ffff00">动模垫板</text>
<text class="t" x="850.83" y="487.34" font-size="9.6" fill="#ffff00">1</text>
<text class="t" x="877.66" y="487.34" font-size="9.6" fill="#ffff00">45</text>
<text class="t" x="913.76" y="487.34" font-size="8.5" fill="#ffff00">淬火<tspan font-size="9.6">50HRC</tspan></text>
<line x1="740.5" y1="492.5" x2="973.5" y2="492.5" stroke="#00ffff" stroke-width="1"/>
<text class="t" x="747.83" y="502.35" font-size="9.6" fill="#ffff00">8</text>
<text class="t" x="792.5" y="502.35" font-size="8.5" fill="#ffff00">支架</text>
<text class="t" x="850.83" y="502.35" font-size="9.6" fill="#ffff00">4</text>
<text class="t" x="871.53" y="502.35" font-size="9.6" fill="#ffff00">T10A</text>
<text class="t" x="913.76" y="502.35" font-size="8.5" fill="#ffff00">淬火<tspan font-size="9.6">50HRC</tspan></text>
<line x1="740.5" y1="507.5" x2="973.5" y2="507.5" stroke="#00ffff" stroke-width="1"/>
<text class="t" x="747.83" y="517.36" font-size="9.6" fill="#ffff00">7</text>
<text class="t" x="788.25" y="517.36" font-size="8.5" fill="#ffff00">固定板</text>
<text class="t" x="850.83" y="517.36" font-size="9.6" fill="#ffff00">1</text>
<text class="t" x="877.66" y="517.36" font-size="9.6" fill="#ffff00">45</text>
<text class="t" x="913.76" y="517.36" font-size="8.5" fill="#ffff00">淬火<tspan font-size="9.6">50HRC</tspan></text>
<line x1="740.5" y1="522.5" x2="973.5" y2="522.5" stroke="#00ffff" stroke-width="1"/>
<text class="t" x="747.83" y="532.38" font-size="9.6" fill="#ffff00">6</text>
<text class="t" x="792.5" y="532.38" font-size="8.5" fill="#ffff00">推板</text>
<text class="t" x="850.83" y="532.38" font-size="9.6" fill="#ffff00">1</text>
<text class="t" x="877.66" y="532.38" font-size="9.6" fill="#ffff00">45</text>
<text class="t" x="908.25" y="532.38" font-size="8.5" fill="#ffff00">淬火加中温回火</text>
<line x1="740.5" y1="537.5" x2="973.5" y2="537.5" stroke="#00ffff" stroke-width="1"/>
<text class="t" x="747.83" y="547.39" font-size="9.6" fill="#ffff00">5</text>
<text class="t" x="784" y="547.39" font-size="8.5" fill="#ffff00">动模座板</text>
<text class="t" x="850.83" y="547.39" font-size="9.6" fill="#ffff00">1</text>
<text class="t" x="877.66" y="547.39" font-size="9.6" fill="#ffff00">45</text>
<line x1="740.5" y1="552.5" x2="973.5" y2="552.5" stroke="#00ffff" stroke-width="1"/>
<text class="t" x="747.83" y="562.4" font-size="9.6" fill="#ffff00">4</text>
<text class="t" x="780.53" y="562.4" font-size="8.5" fill="#ffff00">动模型芯<tspan font-size="9.6">C</tspan></text>
<text class="t" x="850.83" y="562.4" font-size="9.6" fill="#ffff00">1</text>
<text class="t" x="862.73" y="564.9" font-size="9.6" fill="#ffff00">Cr12MoV</text>
<text class="t" x="908.25" y="562.4" font-size="8.5" fill="#ffff00">淬火加低温回火</text>
<line x1="740.5" y1="567.5" x2="973.5" y2="567.5" stroke="#00ffff" stroke-width="1"/>
<text class="t" x="747.83" y="577.42" font-size="9.6" fill="#ffff00">3</text>
<text class="t" x="780.8" y="577.42" font-size="8.5" fill="#ffff00">动模型芯<tspan font-size="9.6">B</tspan></text>
<text class="t" x="850.83" y="577.42" font-size="9.6" fill="#ffff00">1</text>
<text class="t" x="862.73" y="582.92" font-size="9.6" fill="#ffff00">Cr12MoV</text>
<text class="t" x="908.25" y="577.42" font-size="8.5" fill="#ffff00">淬火加低温回火</text>
<line x1="740.5" y1="582.5" x2="973.5" y2="582.5" stroke="#00ffff" stroke-width="1"/>
<text class="t" x="747.83" y="592.43" font-size="9.6" fill="#ffff00">2</text>
<text class="t" x="780.8" y="592.43" font-size="8.5" fill="#ffff00">动模型芯<tspan font-size="9.6">A</tspan></text>
<text class="t" x="850.83" y="592.43" font-size="9.6" fill="#ffff00">1</text>
<text class="t" x="862.73" y="596.93" font-size="9.6" fill="#ffff00">Cr12MoV</text>
<text class="t" x="908.25" y="592.43" font-size="8.5" fill="#ffff00">淬火加低温回火</text>
<line x1="740.5" y1="597.5" x2="973.5" y2="597.5" stroke="#00ffff" stroke-width="1"/>
<text class="t" x="747.83" y="607.44" font-size="9.6" fill="#ffff00">1</text>
<text class="t" x="792.5" y="607.44" font-size="8.5" fill="#ffff00">水嘴</text>
<text class="t" x="850.83" y="607.44" font-size="9.6" fill="#ffff00">2</text>
<line x1="740.5" y1="612.5" x2="973.5" y2="612.5" stroke="#00ffff" stroke-width="1"/>
<text class="t" x="742" y="622.46" font-size="8.5" fill="#ffff00">序号</text>
<text class="t" x="792.5" y="622.46" font-size="8.5" fill="#ffff00">名称</text>
<text class="t" x="845" y="622.46" font-size="8.5" fill="#ffff00">数量</text>
<text class="t" x="874.5" y="622.46" font-size="8.5" fill="#ffff00">材料</text>
<text class="t" x="929.5" y="622.46" font-size="8.5" fill="#ffff00">备注</text>
<line x1="740.5" y1="87.5" x2="973.5" y2="87.5" stroke="#ffff00" stroke-width="1"/>
<line x1="740.5" y1="627.5" x2="973.5" y2="627.5" stroke="#ffff00" stroke-width="1"/>
<line x1="740.5" y1="87.5" x2="740.5" y2="627.5" stroke="#ffff00" stroke-width="1"/>
<line x1="760.5" y1="87.5" x2="760.5" y2="627.5" stroke="#ffff00" stroke-width="1"/>
<line x1="843.5" y1="87.5" x2="843.5" y2="627.5" stroke="#ffff00" stroke-width="1"/>
<line x1="863.5" y1="87.5" x2="863.5" y2="627.5" stroke="#ffff00" stroke-width="1"/>
<line x1="905.5" y1="87.5" x2="905.5" y2="627.5" stroke="#ffff00" stroke-width="1"/>
<line x1="740.5" y1="627.5" x2="740.5" y2="694.5" stroke="#ffff00" stroke-width="1"/>
<line x1="888.5" y1="627.5" x2="888.5" y2="694.5" stroke="#ffff00" stroke-width="1"/>
<line x1="888.5" y1="646.5" x2="973.5" y2="646.5" stroke="#ffff00" stroke-width="1"/>
<line x1="740.5" y1="659.5" x2="973.5" y2="659.5" stroke="#ffff00" stroke-width="1"/>
<line x1="740.5" y1="670.5" x2="823.5" y2="670.5" stroke="#ffff00" stroke-width="1"/>
<line x1="888.5" y1="670.5" x2="973.5" y2="670.5" stroke="#ffff00" stroke-width="1"/>
<line x1="740.5" y1="682.5" x2="823.5" y2="682.5" stroke="#ffff00" stroke-width="1"/>
<line x1="888.5" y1="682.5" x2="973.5" y2="682.5" stroke="#ffff00" stroke-width="1"/>
<line x1="765.5" y1="659.5" x2="765.5" y2="694.5" stroke="#ffff00" stroke-width="1"/>
<line x1="798.5" y1="659.5" x2="798.5" y2="694.5" stroke="#ffff00" stroke-width="1"/>
<line x1="823.5" y1="659.5" x2="823.5" y2="694.5" stroke="#ffff00" stroke-width="1"/>
<line x1="917.5" y1="646.5" x2="917.5" y2="670.5" stroke="#ffff00" stroke-width="1"/>
<line x1="945.5" y1="646.5" x2="945.5" y2="670.5" stroke="#ffff00" stroke-width="1"/>
<text class="t" x="749" y="649" font-size="11.8" fill="#ffff00">塑料注射模双向脱料机构</text>
<text class="t" x="927.5" y="641" font-size="9" fill="#ffff00">1</text>
<text class="t" x="893.7" y="657.5" font-size="8.3" fill="#ffff00">比例</text>
<text class="t" x="922.7" y="657.5" font-size="8.3" fill="#ffff00">重量</text>
<text class="t" x="948.7" y="657.5" font-size="8.3" fill="#ffff00">共<tspan font-size="9">3</tspan>张</text>
<text class="t" x="901.5" y="668.5" font-size="9" fill="#ffff00">ιe</text>
<text class="t" x="948.7" y="669" font-size="8.3" fill="#ffff00">第<tspan font-size="9">1</tspan>张</text>
<text class="t" x="890" y="680" font-size="10" fill="#ffff00" letter-spacing="0.2">3105000203</text>
<text class="t" x="904.91" y="692" font-size="8.3" fill="#ffff00">机电<tspan font-size="9.5">4</tspan>班</text>
<text class="t" x="743.5" y="669.5" font-size="8.5" fill="#ffff00">制图</text>
<text class="t" x="768.75" y="669.5" font-size="8.5" fill="#ffff00">郑志挺</text>
<text class="t" x="799" y="669.5" font-size="10" fill="#ffff00">12.28</text>
<text class="t" x="743.5" y="681" font-size="8.5" fill="#ffff00">校对</text>
<text class="t" x="743.5" y="692.5" font-size="8.5" fill="#ffff00">审核</text>
<text class="t" x="511.16" y="648.5" font-size="9.6" fill="#ffff00">39</text>
<text class="t" x="556.3" y="648.5" font-size="8.5" fill="#ffff00">顶杆<tspan font-size="9.6">B</tspan></text>
<text class="t" x="617.83" y="648.5" font-size="9.6" fill="#ffff00">6</text>
<text class="t" x="644.66" y="648.5" font-size="9.6" fill="#ffff00">45</text>
<line x1="506.5" y1="653.5" x2="740.5" y2="653.5" stroke="#00ffff" stroke-width="1"/>
<text class="t" x="511.16" y="663.5" font-size="9.6" fill="#ffff00">38</text>
<text class="t" x="547.53" y="663.5" font-size="8.5" fill="#ffff00">动模镶件<tspan font-size="9.6">H</tspan></text>
<text class="t" x="617.83" y="663.5" font-size="9.6" fill="#ffff00">1</text>
<text class="t" x="639.6" y="663.5" font-size="9.6" fill="#ffff00">Cr12</text>
<text class="t" x="681.76" y="663.5" font-size="8.5" fill="#ffff00">调质<tspan font-size="9.6">60HRC</tspan></text>
<line x1="506.5" y1="668.5" x2="740.5" y2="668.5" stroke="#00ffff" stroke-width="1"/>
<text class="t" x="511.16" y="678.5" font-size="9.6" fill="#ffff00">37</text>
<text class="t" x="547.27" y="678.5" font-size="8.5" fill="#ffff00">动模镶件<tspan font-size="9.6">G</tspan></text>
<text class="t" x="617.83" y="678.5" font-size="9.6" fill="#ffff00">1</text>
<text class="t" x="639.6" y="678.5" font-size="9.6" fill="#ffff00">Cr12</text>
<text class="t" x="681.76" y="678.5" font-size="8.5" fill="#ffff00">调质<tspan font-size="9.6">60HRC</tspan></text>
<line x1="506.5" y1="683.5" x2="740.5" y2="683.5" stroke="#00ffff" stroke-width="1"/>
<text class="t" x="511.16" y="692" font-size="9.6" fill="#ffff00">36</text>
<text class="t" x="548.07" y="692" font-size="8.5" fill="#ffff00">动模镶件<tspan font-size="9.6">F</tspan></text>
<text class="t" x="617.83" y="692" font-size="9.6" fill="#ffff00">1</text>
<text class="t" x="639.6" y="692" font-size="9.6" fill="#ffff00">Cr12</text>
<text class="t" x="681.76" y="692" font-size="8.5" fill="#ffff00">调质<tspan font-size="9.6">60HRC</tspan></text>
<line x1="506.5" y1="638.5" x2="740.5" y2="638.5" stroke="#ffff00" stroke-width="1"/>
<line x1="506.5" y1="638.5" x2="506.5" y2="694.5" stroke="#ffff00" stroke-width="1"/>
<line x1="526.5" y1="638.5" x2="526.5" y2="694.5" stroke="#ffff00" stroke-width="1"/>
<line x1="610.5" y1="638.5" x2="610.5" y2="694.5" stroke="#ffff00" stroke-width="1"/>
<line x1="630.5" y1="638.5" x2="630.5" y2="694.5" stroke="#ffff00" stroke-width="1"/>
<line x1="672.5" y1="638.5" x2="672.5" y2="694.5" stroke="#ffff00" stroke-width="1"/>
</svg>
</body></html>
